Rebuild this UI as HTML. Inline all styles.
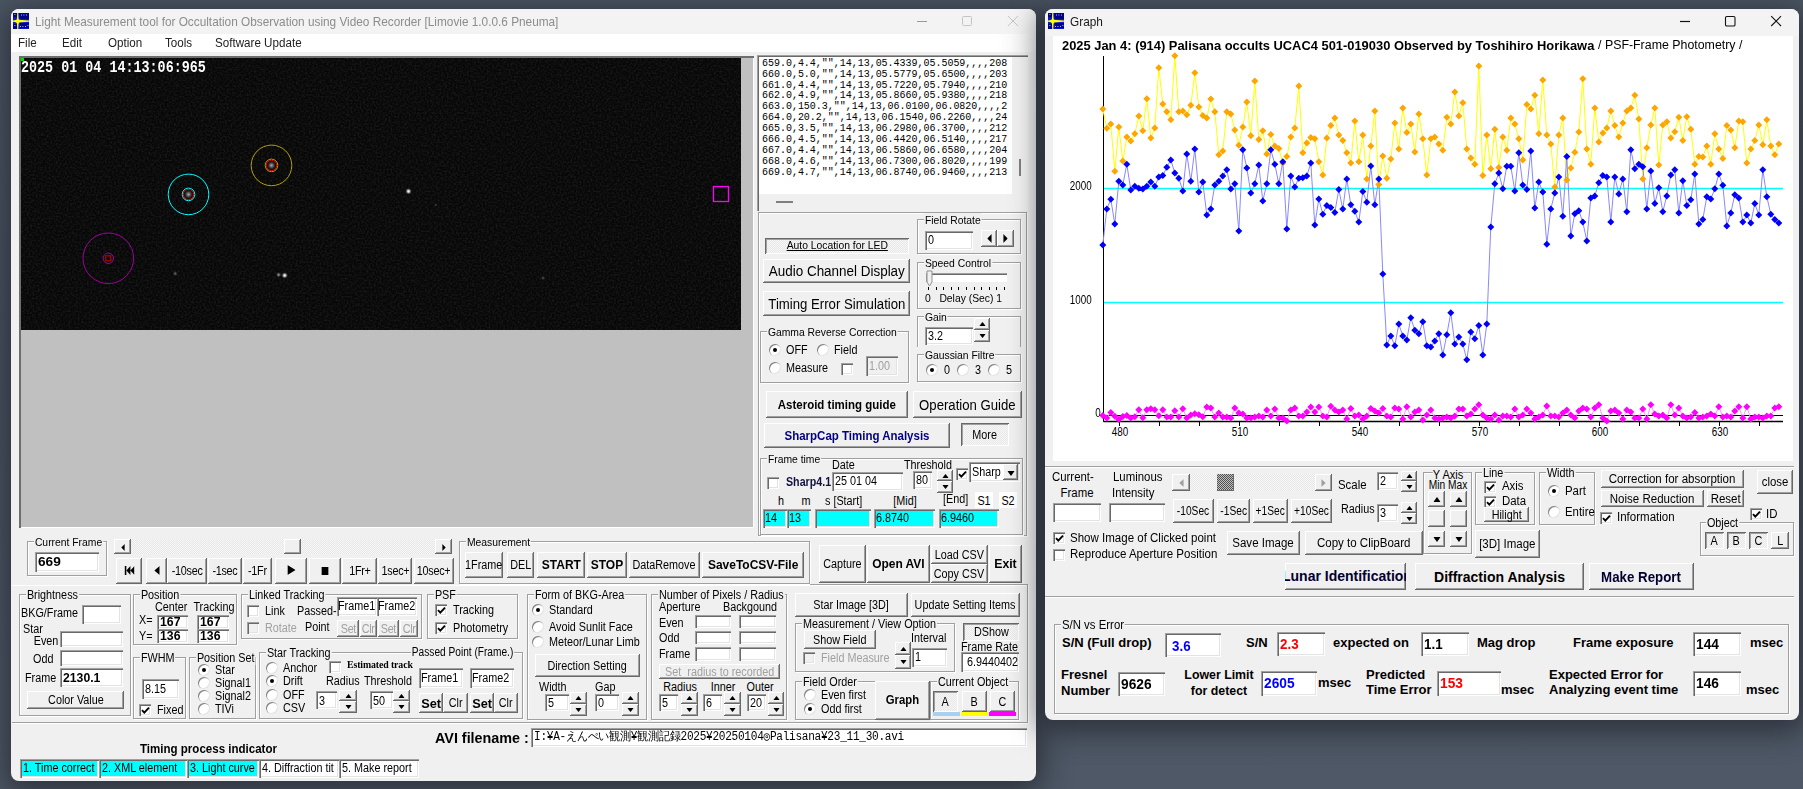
<!DOCTYPE html><html><head><meta charset="utf-8"><style>
*{box-sizing:border-box}
body{margin:0;width:1803px;height:789px;overflow:hidden;position:relative;font-family:"Liberation Sans",sans-serif;font-size:12px;color:#000;
background:linear-gradient(180deg,#4c5664 0%,#485260 40%,#4e5866 100%)}
.a{position:absolute}
.t{white-space:nowrap}
.win{background:#f0f0f0;border-radius:8px;box-shadow:0 6px 28px 6px rgba(25,28,35,.6);overflow:hidden}
.b{background:#f0f0f0;box-shadow:inset -1px -1px #696969,inset 1px 1px #fff,inset -2px -2px #a0a0a0;display:flex;align-items:center;justify-content:center;white-space:nowrap;overflow:hidden;line-height:1}
.bp{background:#f0f0f0;background-image:repeating-conic-gradient(#f6f6f6 0 25%,#e8e8e8 0 50%);background-size:2px 2px;box-shadow:inset 1px 1px #696969,inset -1px -1px #fff,inset 2px 2px #a0a0a0;display:flex;align-items:center;justify-content:center;white-space:nowrap;overflow:hidden;line-height:1}
.i{background:#fff;box-shadow:inset 1px 1px #a0a0a0,inset 2px 2px #696969,inset -1px -1px #fff,inset -2px -2px #e3e3e3;padding-left:3px;white-space:nowrap;overflow:hidden}
.g{border:1px solid #a0a0a0;box-shadow:inset 1px 1px #fff,1px 1px #fff}
.gl{background:#f0f0f0;padding:0 1px}
.ck{background:#fff;box-shadow:inset 1px 1px #a0a0a0,inset 2px 2px #696969,inset -1px -1px #fff,inset -2px -2px #e3e3e3}
.ck.dis{background:#f0f0f0}
.rd{width:12px;height:12px;border-radius:50%;background:#fff;box-shadow:inset 1px 1px #808080,inset -1px -1px #e3e3e3}
.dis{color:#a0a0a0}
.cy{background:#00ffff}
</style></head><body><div class="a win" style="left:11px;top:9px;width:1025px;height:772px"></div>
<div class="a" style="left:11px;top:9px;width:1025px;height:25px;background:#f3f3f3;border-radius:8px 8px 0 0"></div>
<svg class="a" style="left:13px;top:13px" width="16" height="16" viewBox="0 0 16 16">
<rect x="0" y="0" width="16" height="16" fill="#0a14d8"/>
<path d="M6 0H16V6H7Z M0 0H4V4H0Z M7 10H16V15H7Z M0 11H4V16H0Z" fill="#00007a" opacity=".85"/>
<path d="M1.5 1.5h.8M8 2h.8M10.5 2h.8M13 2h.8M1.5 12.5h.8M7 13.5h.8M9.5 13.5h.8M12 13.5h.8M14.5 12.5h.8" stroke="#e8e8ff" stroke-width="1"/>
<path d="M4.2 0 L5.3 0 L5.6 6.8 L16 7.6 L16 8.8 L5.6 9.6 L5.3 16 L4.2 16 L3.9 9.6 L0 8.8 L0 7.6 L3.9 6.8Z" fill="#ffff00"/>
<path d="M4.75 5 L7 8.2 L4.75 11.4 L2.5 8.2Z" fill="#ffff00"/></svg>
<div class="a t" style="left:35px;top:14.0px;font-size:13px;line-height:15px;color:#8c8c8c;transform:scaleX(0.908);transform-origin:0 50%;">Light Measurement tool for Occultation Observation using Video Recorder [Limovie 1.0.0.6 Pneuma]</div>
<svg class="a" style="left:915px;top:14px" width="110" height="16" viewBox="0 0 110 16"><path d="M2 7.5 H12" stroke="#9a9a9a" stroke-width="1"/><rect x="47.5" y="2.5" width="9" height="9" rx="1" fill="none" stroke="#c4c4c4"/><path d="M93 2 L103 12 M103 2 L93 12" stroke="#c4c4c4" stroke-width="1"/></svg>
<div class="a" style="left:11px;top:34px;width:1025px;height:18px;background:linear-gradient(90deg,#fff 0,#fff 96%,#f3f3f3 100%)"></div>
<div class="a t" style="left:18px;top:36.2px;font-size:12.5px;line-height:14.5px;color:#222;transform:scaleX(0.93);transform-origin:0 50%;">File</div>
<div class="a t" style="left:62px;top:36.2px;font-size:12.5px;line-height:14.5px;color:#222;transform:scaleX(0.93);transform-origin:0 50%;">Edit</div>
<div class="a t" style="left:108px;top:36.2px;font-size:12.5px;line-height:14.5px;color:#222;transform:scaleX(0.93);transform-origin:0 50%;">Option</div>
<div class="a t" style="left:165px;top:36.2px;font-size:12.5px;line-height:14.5px;color:#222;transform:scaleX(0.93);transform-origin:0 50%;">Tools</div>
<div class="a t" style="left:215px;top:36.2px;font-size:12.5px;line-height:14.5px;color:#222;transform:scaleX(0.93);transform-origin:0 50%;">Software Update</div>
<div class="a" style="left:19px;top:56px;width:735px;height:472px;background:#c0c0c0;box-shadow:inset 2px 2px #6e6e6e,inset -1px -1px #fff"></div>
<div class="a" style="left:21px;top:58px;width:720px;height:272px;background:#070707"></div>
<svg class="a" style="left:21px;top:58px" width="720" height="272" viewBox="21 58 720 272">
<defs><radialGradient id="st"><stop offset="0" stop-color="#fff"/><stop offset=".35" stop-color="#bbb"/><stop offset="1" stop-color="#222" stop-opacity="0"/></radialGradient>
<radialGradient id="st2"><stop offset="0" stop-color="#aaa"/><stop offset=".4" stop-color="#555"/><stop offset="1" stop-color="#111" stop-opacity="0"/></radialGradient>
<filter id="nz" x="0" y="0" width="100%" height="100%"><feTurbulence type="fractalNoise" baseFrequency="0.55" numOctaves="1" seed="3"/><feColorMatrix values="0 0 0 0 0.1  0 0 0 0 0.1  0 0 0 0 0.1  0 0 0 1.2 -0.45"/></filter></defs>
<rect x="21" y="58" width="720" height="272" filter="url(#nz)" opacity=".45"/>
<circle cx="188.5" cy="194.4" r="5" fill="url(#st2)"/>
<circle cx="188.5" cy="194.4" r="20.3" fill="none" stroke="#00ffff" stroke-width="1"/>
<circle cx="188.5" cy="194.4" r="6.3" fill="none" stroke="#00ffff" stroke-width="1"/>
<circle cx="188.5" cy="194.4" r="5.2" fill="none" stroke="#ff0000" stroke-width="1"/>
<circle cx="271.5" cy="165.4" r="5" fill="url(#st2)"/>
<circle cx="271.5" cy="165.4" r="20.3" fill="none" stroke="#b4a000" stroke-width="1"/>
<circle cx="271.5" cy="165.4" r="6.3" fill="none" stroke="#b4a000" stroke-width="1"/>
<circle cx="271.5" cy="165.4" r="5.2" fill="none" stroke="#e00000" stroke-width="1"/>
<circle cx="108.3" cy="258.3" r="25.3" fill="none" stroke="#a000a0" stroke-width="1"/>
<circle cx="108.3" cy="258.3" r="5.2" fill="none" stroke="#a000a0" stroke-width="1"/>
<rect x="105.8" y="255.8" width="5" height="5" fill="none" stroke="#d00000" stroke-width="1"/>
<circle cx="408.5" cy="191.3" r="3.5" fill="url(#st)"/>
<circle cx="278.6" cy="274.8" r="3" fill="url(#st2)"/>
<circle cx="284.7" cy="275.4" r="3.5" fill="url(#st)"/>
<circle cx="175.2" cy="273.6" r="3" fill="url(#st2)" opacity=".6"/>
<circle cx="543" cy="278" r="2.5" fill="url(#st2)" opacity=".5"/>
<circle cx="436" cy="205" r="2" fill="url(#st2)" opacity=".4"/>
<rect x="713.5" y="186.5" width="15" height="15" fill="none" stroke="#ff00ff" stroke-width="1.3"/>
</svg>
<div class="a t" style="left:21px;top:58px;font-family:'Liberation Mono',monospace;font-weight:bold;font-size:13.4px;line-height:17px;color:#fff;transform:scaleY(1.18);transform-origin:0 0;letter-spacing:0px">2025 01 04 14:13:06:965</div>
<div class="a" style="left:757px;top:55px;width:271px;height:156px;background:linear-gradient(90deg,#f0f0f0 0,#f0f0f0 94%,#f6f6f6 100%);box-shadow:inset 1px 1px #a0a0a0,inset 2px 2px #696969"></div>
<div class="a" style="left:759px;top:57px;width:253px;height:137px;background:#fff"></div>
<div class="a t" style="left:762px;top:58.6px;font-family:'Liberation Mono',monospace;font-size:10px;line-height:10.95px;letter-spacing:-0.02px;color:#000">659.0,4.4,&quot;&quot;,14,13,05.4339,05.5059,,,,208<br>660.0,5.0,&quot;&quot;,14,13,05.5779,05.6500,,,,203<br>661.0,4.4,&quot;&quot;,14,13,05.7220,05.7940,,,,210<br>662.0,4.9,&quot;&quot;,14,13,05.8660,05.9380,,,,218<br>663.0,150.3,&quot;&quot;,14,13,06.0100,06.0820,,,,2<br>664.0,20.2,&quot;&quot;,14,13,06.1540,06.2260,,,,24<br>665.0,3.5,&quot;&quot;,14,13,06.2980,06.3700,,,,212<br>666.0,4.5,&quot;&quot;,14,13,06.4420,06.5140,,,,217<br>667.0,4.4,&quot;&quot;,14,13,06.5860,06.6580,,,,204<br>668.0,4.6,&quot;&quot;,14,13,06.7300,06.8020,,,,199<br>669.0,4.7,&quot;&quot;,14,13,06.8740,06.9460,,,,213</div>
<div class="a" style="left:1019px;top:159px;width:2px;height:17px;background:#808080"></div>
<div class="a" style="left:21px;top:58px;width:3px;height:3px;background:#00e000"></div>
<div class="a" style="left:776px;top:201px;width:17px;height:2px;background:#808080"></div>
<div class="a g" style="left:758px;top:212px;width:269px;height:324px;"></div>
<div class="a bp" style="left:765px;top:238px;width:144px;height:16px;font-size:11.5px;"><span style="display:inline-block;transform:scaleX(0.9);"><u>Auto Location for LED</u></span></div>
<div class="a b" style="left:763px;top:259px;width:147px;height:24px;font-size:14px;"><span style="display:inline-block;transform:scaleX(0.96);">Audio Channel Display</span></div>
<div class="a b" style="left:763px;top:291px;width:147px;height:25px;font-size:14px;"><span style="display:inline-block;transform:scaleX(0.94);">Timing Error Simulation</span></div>
<div class="a g" style="left:917px;top:219px;width:104px;height:35px;"></div>
<div class="a t gl" style="left:924px;top:213px;font-size:11.5px;line-height:14px;transform:scaleX(0.9);transform-origin:0 50%">Field Rotate</div>
<div class="a i" style="left:925px;top:231px;width:48px;height:19px;font-size:12px;line-height:19px;"><span style="display:inline-block;transform:scaleX(0.9);transform-origin:0 50%">0</span></div>
<div class="a b" style="left:981px;top:230px;width:16px;height:17px;font-size:12px;"><span style="display:inline-block;transform:scaleX(0.9);"><svg width="5" height="9" viewBox="0 0 5 9"><path d="M5 0 L0 4.5 L5 9Z"/></svg></span></div>
<div class="a b" style="left:997px;top:230px;width:17px;height:17px;font-size:12px;"><span style="display:inline-block;transform:scaleX(0.9);"><svg width="5" height="9" viewBox="0 0 5 9"><path d="M0 0 L5 4.5 L0 9Z"/></svg></span></div>
<div class="a g" style="left:917px;top:262px;width:104px;height:47px;"></div>
<div class="a t gl" style="left:924px;top:256px;font-size:11.5px;line-height:14px;transform:scaleX(0.9);transform-origin:0 50%">Speed Control</div>
<div class="a" style="left:926px;top:273px;width:81px;height:9px;background:#fff;box-shadow:inset 1px 1px #a0a0a0,inset 2px 2px #696969,inset -1px -1px #fff"></div>
<svg class="a" style="left:926px;top:270px" width="8" height="17" viewBox="0 0 8 17"><path d="M1 1 H6 V12 L3.5 16 L1 12Z" fill="#f0f0f0" stroke="#909090"/></svg>
<div class="a" style="left:928.0px;top:287px;width:1px;height:3px;background:#000"></div>
<div class="a" style="left:935.6px;top:287px;width:1px;height:3px;background:#000"></div>
<div class="a" style="left:943.2px;top:287px;width:1px;height:3px;background:#000"></div>
<div class="a" style="left:950.8px;top:287px;width:1px;height:3px;background:#000"></div>
<div class="a" style="left:958.4px;top:287px;width:1px;height:3px;background:#000"></div>
<div class="a" style="left:966.0px;top:287px;width:1px;height:3px;background:#000"></div>
<div class="a" style="left:973.6px;top:287px;width:1px;height:3px;background:#000"></div>
<div class="a" style="left:981.2px;top:287px;width:1px;height:3px;background:#000"></div>
<div class="a" style="left:988.8px;top:287px;width:1px;height:3px;background:#000"></div>
<div class="a" style="left:996.4px;top:287px;width:1px;height:3px;background:#000"></div>
<div class="a" style="left:1004.0px;top:287px;width:1px;height:3px;background:#000"></div>
<div class="a t" style="left:925px;top:291.9px;font-size:11.5px;line-height:13.5px;transform:scaleX(0.9);transform-origin:0 50%;">0&nbsp;&nbsp;&nbsp;Delay (Sec) 1</div>
<div class="a g" style="left:917px;top:316px;width:104px;height:31px;border-bottom:none;box-shadow:inset 1px 1px #fff"></div>
<div class="a t gl" style="left:924px;top:310px;font-size:11.5px;line-height:14px;transform:scaleX(0.9);transform-origin:0 50%">Gain</div>
<div class="a i" style="left:925px;top:327px;width:48px;height:18px;font-size:12px;line-height:18px;"><span style="display:inline-block;transform:scaleX(0.9);transform-origin:0 50%">3.2</span></div>
<div class="a b" style="left:974px;top:318px;width:16px;height:12px;font-size:12px;line-height:0"><span style="display:inline-block;transform:scaleX(0.9);"><svg width="7" height="4" viewBox="0 0 7 4"><path d="M0 4 L3.5 0 L7 4Z" fill="#000"/></svg></span></div>
<div class="a b" style="left:974px;top:330px;width:16px;height:12px;font-size:12px;line-height:0"><span style="display:inline-block;transform:scaleX(0.9);"><svg width="7" height="4" viewBox="0 0 7 4"><path d="M0 0 L3.5 4 L7 0Z" fill="#000"/></svg></span></div>
<div class="a g" style="left:917px;top:354px;width:104px;height:28px;"></div>
<div class="a t gl" style="left:924px;top:348px;font-size:11.5px;line-height:14px;transform:scaleX(0.9);transform-origin:0 50%">Gaussian Filtre</div>
<div class="a g" style="left:760px;top:331px;width:149px;height:52px;"></div>
<div class="a t gl" style="left:767px;top:325px;font-size:11.5px;line-height:14px;transform:scaleX(0.9);transform-origin:0 50%">Gamma Reverse Correction</div>
<div class="a rd" style="left:768.5px;top:344px"><div style="position:absolute;left:4px;top:4px;width:4px;height:4px;border-radius:50%;background:#000"></div></div>
<div class="a t" style="left:786px;top:343.0px;font-size:12px;line-height:14px;transform:scaleX(0.9);transform-origin:0 50%;">OFF</div>
<div class="a rd" style="left:816.5px;top:344px"></div>
<div class="a t" style="left:834px;top:343.0px;font-size:12px;line-height:14px;transform:scaleX(0.9);transform-origin:0 50%;">Field</div>
<div class="a rd" style="left:768.5px;top:362px"></div>
<div class="a t" style="left:786px;top:361.0px;font-size:12px;line-height:14px;transform:scaleX(0.9);transform-origin:0 50%;">Measure</div>
<div class="a ck" style="left:841px;top:363px;width:12px;height:12px"></div>
<div class="a i" style="left:866px;top:356px;width:32px;height:20px;font-size:12px;line-height:20px;color:#a0a0a0;background:#f0f0f0"><span style="display:inline-block;transform:scaleX(0.9);transform-origin:0 50%">1.00</span></div>
<div class="a rd" style="left:925.5px;top:363.7px"><div style="position:absolute;left:4px;top:4px;width:4px;height:4px;border-radius:50%;background:#000"></div></div>
<div class="a t" style="left:944px;top:363.0px;font-size:12px;line-height:14px;transform:scaleX(0.9);transform-origin:0 50%;">0</div>
<div class="a rd" style="left:956.5px;top:363.7px"></div>
<div class="a t" style="left:975px;top:363.0px;font-size:12px;line-height:14px;transform:scaleX(0.9);transform-origin:0 50%;">3</div>
<div class="a rd" style="left:987.5px;top:363.7px"></div>
<div class="a t" style="left:1006px;top:363.0px;font-size:12px;line-height:14px;transform:scaleX(0.9);transform-origin:0 50%;">5</div>
<div class="a b" style="left:766px;top:391px;width:142px;height:27px;font-size:13px;font-weight:bold;"><span style="display:inline-block;transform:scaleX(0.883);">Asteroid timing guide</span></div>
<div class="a b" style="left:913px;top:391px;width:109px;height:27px;font-size:14px;"><span style="display:inline-block;transform:scaleX(0.94);">Operation Guide</span></div>
<div class="a b" style="left:764px;top:423px;width:186px;height:25px;font-size:13px;font-weight:bold;color:#000080;"><span style="display:inline-block;transform:scaleX(0.884);">SharpCap Timing Analysis</span></div>
<div class="a bp" style="left:961px;top:423px;width:48px;height:23px;font-size:12px;"><span style="display:inline-block;transform:scaleX(0.9);">More</span></div>
<div class="a g" style="left:760px;top:458px;width:263px;height:77px;"></div>
<div class="a t gl" style="left:767px;top:452px;font-size:11.5px;line-height:14px;transform:scaleX(0.9);transform-origin:0 50%">Frame time</div>
<div class="a t" style="left:832px;top:458.0px;font-size:12px;line-height:14px;transform:scaleX(0.9);transform-origin:0 50%;">Date</div>
<div class="a t" style="left:904px;top:458.0px;font-size:12px;line-height:14px;transform:scaleX(0.9);transform-origin:0 50%;">Threshold</div>
<div class="a ck" style="left:767px;top:477px;width:12px;height:12px"></div>
<div class="a t" style="left:786px;top:475.0px;font-size:12px;line-height:14px;font-weight:bold;color:#101040;transform:scaleX(0.89);transform-origin:0 50%;">Sharp4.1</div>
<div class="a i" style="left:832px;top:472px;width:71px;height:19px;font-size:12px;line-height:19px;"><span style="display:inline-block;transform:scaleX(0.9);transform-origin:0 50%">25 01 04</span></div>
<div class="a i" style="left:913px;top:471px;width:19px;height:18px;font-size:12px;line-height:18px;"><span style="display:inline-block;transform:scaleX(0.9);transform-origin:0 50%">80</span></div>
<div class="a b" style="left:937px;top:470px;width:16px;height:11px;font-size:12px;line-height:0"><span style="display:inline-block;transform:scaleX(0.9);"><svg width="7" height="4" viewBox="0 0 7 4"><path d="M0 4 L3.5 0 L7 4Z" fill="#000"/></svg></span></div>
<div class="a b" style="left:937px;top:481px;width:16px;height:12px;font-size:12px;line-height:0"><span style="display:inline-block;transform:scaleX(0.9);"><svg width="7" height="4" viewBox="0 0 7 4"><path d="M0 0 L3.5 4 L7 0Z" fill="#000"/></svg></span></div>
<div class="a ck" style="left:956px;top:468px;width:12px;height:12px"><svg width="9" height="9" viewBox="0 0 9 9" style="position:absolute;left:1.5px;top:1.5px"><path d="M1 4.2 L3.3 6.6 L8 1.6" stroke="#000" stroke-width="1.9" fill="none"/></svg></div>
<div class="a i" style="left:969px;top:462px;width:51px;height:20px;font-size:12px;line-height:20px;"><span style="display:inline-block;transform:scaleX(0.9);transform-origin:0 50%">Sharp</span></div>
<div class="a b" style="left:1003px;top:464px;width:15px;height:16px;font-size:12px;"><span style="display:inline-block;transform:scaleX(0.9);"><svg width="8" height="5" viewBox="0 0 8 5"><path d="M0 0 L4 5 L8 0Z"/></svg></span></div>
<div class="a t" style="left:781px;top:494.0px;font-size:12px;line-height:14px;transform:translateX(-50%) scaleX(0.9);transform-origin:50% 50%;">h</div>
<div class="a t" style="left:805.5px;top:494.0px;font-size:12px;line-height:14px;transform:translateX(-50%) scaleX(0.9);transform-origin:50% 50%;">m</div>
<div class="a t" style="left:825px;top:494.0px;font-size:12px;line-height:14px;transform:scaleX(0.9);transform-origin:0 50%;">s [Start]</div>
<div class="a t" style="left:905px;top:494.0px;font-size:12px;line-height:14px;transform:translateX(-50%) scaleX(0.9);transform-origin:50% 50%;">[Mid]</div>
<div class="a t" style="left:943px;top:492.0px;font-size:12px;line-height:14px;transform:scaleX(0.9);transform-origin:0 50%;">[End]</div>
<div class="a" style="left:975px;top:492px;width:18px;height:16px;background:#fff"></div>
<div class="a t" style="left:984px;top:494.0px;font-size:12px;line-height:14px;transform:translateX(-50%) scaleX(0.9);transform-origin:50% 50%;">S1</div>
<div class="a" style="left:999px;top:492px;width:18px;height:16px;background:#fff"></div>
<div class="a t" style="left:1008px;top:494.0px;font-size:12px;line-height:14px;transform:translateX(-50%) scaleX(0.9);transform-origin:50% 50%;">S2</div>
<div class="a i" style="left:763px;top:509px;width:24px;height:19px;font-size:12px;line-height:19px;background:#00ffff;padding-left:2px"><span style="display:inline-block;transform:scaleX(0.9);transform-origin:0 50%">14</span></div>
<div class="a i" style="left:787px;top:509px;width:24px;height:19px;font-size:12px;line-height:19px;background:#00ffff;padding-left:2px"><span style="display:inline-block;transform:scaleX(0.9);transform-origin:0 50%">13</span></div>
<div class="a i" style="left:815px;top:509px;width:56px;height:19px;font-size:12px;line-height:19px;background:#00ffff;padding-left:2px"><span style="display:inline-block;transform:scaleX(0.9);transform-origin:0 50%"></span></div>
<div class="a i" style="left:874px;top:509px;width:61px;height:19px;font-size:12px;line-height:19px;background:#00ffff;padding-left:2px"><span style="display:inline-block;transform:scaleX(0.9);transform-origin:0 50%">6.8740</span></div>
<div class="a i" style="left:939px;top:509px;width:60px;height:19px;font-size:12px;line-height:19px;background:#00ffff;padding-left:2px"><span style="display:inline-block;transform:scaleX(0.9);transform-origin:0 50%">6.9460</span></div>
<div class="a g" style="left:27px;top:541px;width:80px;height:35px;"></div>
<div class="a t gl" style="left:34px;top:535px;font-size:11.5px;line-height:14px;transform:scaleX(0.9);transform-origin:0 50%">Current Frame</div>
<div class="a i" style="left:35px;top:552px;width:64px;height:20px;font-size:13px;line-height:20px;font-weight:bold;"><span style="display:inline-block;transform:scaleX(1.05);transform-origin:0 50%">669</span></div>
<div class="a" style="left:114px;top:539px;width:338px;height:15px;background-image:repeating-conic-gradient(#f8f8f8 0 25%,#e6e6e6 0 50%);background-size:2px 2px"></div>
<div class="a b" style="left:114px;top:539px;width:17px;height:15px;font-size:12px;"><span style="display:inline-block;transform:scaleX(0.9);"><svg width="4" height="7" viewBox="0 0 4 7"><path d="M4 0 L0 3.5 L4 7Z"/></svg></span></div>
<div class="a b" style="left:284px;top:539px;width:17px;height:15px;font-size:12px;"><span style="display:inline-block;transform:scaleX(0.9);"></span></div>
<div class="a b" style="left:435px;top:539px;width:17px;height:15px;font-size:12px;"><span style="display:inline-block;transform:scaleX(0.9);"><svg width="4" height="7" viewBox="0 0 4 7"><path d="M0 0 L4 3.5 L0 7Z"/></svg></span></div>
<div class="a b" style="left:116px;top:558px;width:26px;height:26px;font-size:12px;letter-spacing:-0.3px"><span style="display:inline-block;transform:scaleX(0.9);"><svg width="11" height="9" viewBox="0 0 11 9"><rect x="0" y="0" width="2" height="9"/><path d="M6.5 0 L2 4.5 L6.5 9Z M11 0 L6.5 4.5 L11 9Z"/></svg></span></div>
<div class="a b" style="left:146px;top:558px;width:21px;height:26px;font-size:12px;letter-spacing:-0.3px"><span style="display:inline-block;transform:scaleX(0.9);"><svg width="6" height="9" viewBox="0 0 6 9"><path d="M6 0 L0 4.5 L6 9Z"/></svg></span></div>
<div class="a b" style="left:167px;top:558px;width:40px;height:26px;font-size:12px;letter-spacing:-0.3px"><span style="display:inline-block;transform:scaleX(0.9);">-10sec</span></div>
<div class="a b" style="left:208px;top:558px;width:34px;height:26px;font-size:12px;letter-spacing:-0.3px"><span style="display:inline-block;transform:scaleX(0.9);">-1sec</span></div>
<div class="a b" style="left:243px;top:558px;width:29px;height:26px;font-size:12px;letter-spacing:-0.3px"><span style="display:inline-block;transform:scaleX(0.9);">-1Fr</span></div>
<div class="a b" style="left:275px;top:558px;width:32px;height:26px;font-size:12px;letter-spacing:-0.3px"><span style="display:inline-block;transform:scaleX(0.9);"><svg width="9" height="10" viewBox="0 0 9 10"><path d="M0 0 L9 5 L0 10Z"/></svg></span></div>
<div class="a b" style="left:309px;top:558px;width:32px;height:26px;font-size:12px;letter-spacing:-0.3px"><span style="display:inline-block;transform:scaleX(0.9);"><svg width="8" height="8" viewBox="0 0 8 8"><rect width="8" height="8"/></svg></span></div>
<div class="a b" style="left:342px;top:558px;width:35px;height:26px;font-size:12px;letter-spacing:-0.3px"><span style="display:inline-block;transform:scaleX(0.9);">1Fr+</span></div>
<div class="a b" style="left:378px;top:558px;width:34px;height:26px;font-size:12px;letter-spacing:-0.3px"><span style="display:inline-block;transform:scaleX(0.9);">1sec+</span></div>
<div class="a b" style="left:414px;top:558px;width:40px;height:26px;font-size:12px;letter-spacing:-0.3px"><span style="display:inline-block;transform:scaleX(0.9);">10sec+</span></div>
<div class="a g" style="left:459px;top:541px;width:351px;height:43px;"></div>
<div class="a t gl" style="left:466px;top:535px;font-size:11.5px;line-height:14px;transform:scaleX(0.9);transform-origin:0 50%">Measurement</div>
<div class="a b" style="left:465px;top:552px;width:38px;height:26px;font-size:12px;"><span style="display:inline-block;transform:scaleX(0.9);">1Frame</span></div>
<div class="a b" style="left:507px;top:552px;width:27px;height:26px;font-size:12px;"><span style="display:inline-block;transform:scaleX(0.9);">DEL</span></div>
<div class="a b" style="left:537px;top:552px;width:48px;height:26px;font-size:12.5px;font-weight:bold;"><span style="display:inline-block;transform:scaleX(0.96);">START</span></div>
<div class="a b" style="left:587px;top:552px;width:40px;height:26px;font-size:12.5px;font-weight:bold;"><span style="display:inline-block;transform:scaleX(0.96);">STOP</span></div>
<div class="a b" style="left:629px;top:552px;width:71px;height:26px;font-size:12px;"><span style="display:inline-block;transform:scaleX(0.9);">DataRemove</span></div>
<div class="a b" style="left:702px;top:552px;width:102px;height:26px;font-size:12.5px;font-weight:bold;"><span style="display:inline-block;transform:scaleX(0.96);">SaveToCSV-File</span></div>
<div class="a b" style="left:819px;top:545px;width:47px;height:38px;font-size:12px;"><span style="display:inline-block;transform:scaleX(0.9);">Capture</span></div>
<div class="a b" style="left:867px;top:545px;width:63px;height:38px;font-size:12.5px;font-weight:bold;"><span style="display:inline-block;transform:scaleX(0.956);">Open AVI</span></div>
<div class="a b" style="left:931px;top:545px;width:57px;height:19px;font-size:12px;"><span style="display:inline-block;transform:scaleX(0.9);">Load CSV</span></div>
<div class="a b" style="left:931px;top:564px;width:57px;height:19px;font-size:12px;"><span style="display:inline-block;transform:scaleX(0.9);">Copy CSV</span></div>
<div class="a b" style="left:989px;top:545px;width:33px;height:38px;font-size:12.5px;font-weight:bold;"><span style="display:inline-block;transform:scaleX(0.98);">Exit</span></div>
<div class="a" style="left:12px;top:585px;width:1016px;height:1px;background:#fff"></div>
<div class="a" style="left:12px;top:722px;width:1016px;height:1px;background:#a0a0a0"></div>
<div class="a" style="left:12px;top:723px;width:1016px;height:1px;background:#fff"></div>
<div class="a g" style="left:19px;top:594px;width:112px;height:122px;"></div>
<div class="a t gl" style="left:26px;top:588px;font-size:12px;line-height:14px;transform:scaleX(0.9);transform-origin:0 50%">Brightness</div>
<div class="a t" style="left:21px;top:606.0px;font-size:12px;line-height:14px;transform:scaleX(0.9);transform-origin:0 50%;">BKG/Frame</div>
<div class="a i" style="left:82px;top:605px;width:39px;height:19px;font-size:12px;line-height:19px;"><span style="display:inline-block;transform:scaleX(0.9);transform-origin:0 50%"></span></div>
<div class="a t" style="left:23px;top:622.0px;font-size:12px;line-height:14px;transform:scaleX(0.9);transform-origin:0 50%;">Star</div>
<div class="a t" style="right:1745px;top:633.5px;font-size:12px;line-height:14px;transform:scaleX(0.9);transform-origin:100% 50%;">Even</div>
<div class="a i" style="left:60px;top:631px;width:63px;height:16px;font-size:12px;line-height:16px;"><span style="display:inline-block;transform:scaleX(0.9);transform-origin:0 50%"></span></div>
<div class="a t" style="left:33px;top:652.0px;font-size:12px;line-height:14px;transform:scaleX(0.9);transform-origin:0 50%;">Odd</div>
<div class="a i" style="left:60px;top:650px;width:63px;height:16px;font-size:12px;line-height:16px;"><span style="display:inline-block;transform:scaleX(0.9);transform-origin:0 50%"></span></div>
<div class="a t" style="left:25px;top:671.0px;font-size:12px;line-height:14px;transform:scaleX(0.9);transform-origin:0 50%;">Frame</div>
<div class="a i" style="left:60px;top:668px;width:63px;height:19px;font-size:13px;line-height:19px;font-weight:bold;"><span style="display:inline-block;transform:scaleX(0.94);transform-origin:0 50%">2130.1</span></div>
<div class="a b" style="left:27px;top:691px;width:97px;height:18px;font-size:12px;"><span style="display:inline-block;transform:scaleX(0.9);">Color Value</span></div>
<div class="a g" style="left:133px;top:594px;width:104px;height:51px;"></div>
<div class="a t gl" style="left:140px;top:588px;font-size:12px;line-height:14px;transform:scaleX(0.9);transform-origin:0 50%">Position</div>
<div class="a t" style="left:155px;top:600.0px;font-size:12px;line-height:14px;transform:scaleX(0.9);transform-origin:0 50%;">Center&nbsp;&nbsp;Tracking</div>
<div class="a t" style="left:139px;top:613.0px;font-size:12px;line-height:14px;transform:scaleX(0.9);transform-origin:0 50%;">X=</div>
<div class="a t" style="left:139px;top:629.0px;font-size:12px;line-height:14px;transform:scaleX(0.9);transform-origin:0 50%;">Y=</div>
<div class="a i" style="left:157px;top:615px;width:31px;height:14px;font-size:12.5px;line-height:14px;font-weight:bold;line-height:15px"><span style="display:inline-block;transform:scaleX(0.98);transform-origin:0 50%">167</span></div>
<div class="a i" style="left:197px;top:615px;width:32px;height:14px;font-size:12.5px;line-height:14px;font-weight:bold;line-height:15px"><span style="display:inline-block;transform:scaleX(0.98);transform-origin:0 50%">167</span></div>
<div class="a i" style="left:157px;top:629px;width:31px;height:14px;font-size:12.5px;line-height:14px;font-weight:bold;line-height:15px"><span style="display:inline-block;transform:scaleX(0.98);transform-origin:0 50%">136</span></div>
<div class="a i" style="left:197px;top:629px;width:32px;height:14px;font-size:12.5px;line-height:14px;font-weight:bold;line-height:15px"><span style="display:inline-block;transform:scaleX(0.98);transform-origin:0 50%">136</span></div>
<div class="a g" style="left:241px;top:594px;width:181px;height:45px;"></div>
<div class="a t gl" style="left:248px;top:588px;font-size:12px;line-height:14px;transform:scaleX(0.9);transform-origin:0 50%">Linked Tracking</div>
<div class="a ck" style="left:247px;top:605px;width:12px;height:12px"></div>
<div class="a t" style="left:265px;top:603.5px;font-size:12px;line-height:14px;transform:scaleX(0.9);transform-origin:0 50%;">Link</div>
<div class="a t" style="left:297px;top:604.0px;font-size:12px;line-height:14px;transform:scaleX(0.9);transform-origin:0 50%;">Passed-</div>
<div class="a t" style="left:305px;top:620.0px;font-size:12px;line-height:14px;transform:scaleX(0.9);transform-origin:0 50%;">Point</div>
<div class="a ck dis" style="left:247px;top:622px;width:12px;height:12px"></div>
<div class="a t" style="left:265px;top:621.0px;font-size:12px;line-height:14px;color:#a0a0a0;transform:scaleX(0.9);transform-origin:0 50%;">Rotate</div>
<div class="a i" style="left:337px;top:597px;width:40px;height:19px;font-size:12px;line-height:19px;padding-left:1px"><span style="display:inline-block;transform:scaleX(0.9);transform-origin:0 50%">Frame1</span></div>
<div class="a i" style="left:377px;top:597px;width:40px;height:19px;font-size:12px;line-height:19px;padding-left:1px"><span style="display:inline-block;transform:scaleX(0.9);transform-origin:0 50%">Frame2</span></div>
<div class="a b" style="left:337px;top:620px;width:22px;height:17px;font-size:12px;color:#a0a0a0;letter-spacing:-0.4px"><span style="display:inline-block;transform:scaleX(0.9);">Set</span></div>
<div class="a b" style="left:360px;top:620px;width:17px;height:17px;font-size:12px;color:#a0a0a0;letter-spacing:-0.4px"><span style="display:inline-block;transform:scaleX(0.9);">Clr</span></div>
<div class="a b" style="left:378px;top:620px;width:21px;height:17px;font-size:12px;color:#a0a0a0;letter-spacing:-0.4px"><span style="display:inline-block;transform:scaleX(0.9);">Set</span></div>
<div class="a b" style="left:400px;top:620px;width:18px;height:17px;font-size:12px;color:#a0a0a0;letter-spacing:-0.4px"><span style="display:inline-block;transform:scaleX(0.9);">Clr</span></div>
<div class="a g" style="left:427px;top:594px;width:91px;height:45px;"></div>
<div class="a t gl" style="left:434px;top:588px;font-size:12px;line-height:14px;transform:scaleX(0.9);transform-origin:0 50%">PSF</div>
<div class="a ck" style="left:435px;top:604px;width:12px;height:12px"><svg width="9" height="9" viewBox="0 0 9 9" style="position:absolute;left:1.5px;top:1.5px"><path d="M1 4.2 L3.3 6.6 L8 1.6" stroke="#000" stroke-width="1.9" fill="none"/></svg></div>
<div class="a t" style="left:453px;top:603.0px;font-size:12px;line-height:14px;transform:scaleX(0.9);transform-origin:0 50%;">Tracking</div>
<div class="a ck" style="left:435px;top:622px;width:12px;height:12px"><svg width="9" height="9" viewBox="0 0 9 9" style="position:absolute;left:1.5px;top:1.5px"><path d="M1 4.2 L3.3 6.6 L8 1.6" stroke="#000" stroke-width="1.9" fill="none"/></svg></div>
<div class="a t" style="left:453px;top:621.0px;font-size:12px;line-height:14px;transform:scaleX(0.9);transform-origin:0 50%;">Photometry</div>
<div class="a g" style="left:133px;top:657px;width:53px;height:62px;"></div>
<div class="a t gl" style="left:140px;top:651px;font-size:12px;line-height:14px;transform:scaleX(0.9);transform-origin:0 50%">FWHM</div>
<div class="a i" style="left:142px;top:679px;width:37px;height:20px;font-size:12px;line-height:20px;"><span style="display:inline-block;transform:scaleX(0.9);transform-origin:0 50%">8.15</span></div>
<div class="a ck" style="left:139px;top:704px;width:12px;height:12px"><svg width="9" height="9" viewBox="0 0 9 9" style="position:absolute;left:1.5px;top:1.5px"><path d="M1 4.2 L3.3 6.6 L8 1.6" stroke="#000" stroke-width="1.9" fill="none"/></svg></div>
<div class="a t" style="left:157px;top:703.0px;font-size:12px;line-height:14px;transform:scaleX(0.9);transform-origin:0 50%;">Fixed</div>
<div class="a g" style="left:189px;top:657px;width:67px;height:62px;"></div>
<div class="a t gl" style="left:196px;top:651px;font-size:12px;line-height:14px;transform:scaleX(0.9);transform-origin:0 50%">Position Set</div>
<div class="a rd" style="left:197.5px;top:664px"><div style="position:absolute;left:4px;top:4px;width:4px;height:4px;border-radius:50%;background:#000"></div></div>
<div class="a t" style="left:215px;top:663.0px;font-size:12px;line-height:14px;transform:scaleX(0.9);transform-origin:0 50%;">Star</div>
<div class="a rd" style="left:197.5px;top:677px"></div>
<div class="a t" style="left:215px;top:676.0px;font-size:12px;line-height:14px;transform:scaleX(0.9);transform-origin:0 50%;">Signal1</div>
<div class="a rd" style="left:197.5px;top:690px"></div>
<div class="a t" style="left:215px;top:689.0px;font-size:12px;line-height:14px;transform:scaleX(0.9);transform-origin:0 50%;">Signal2</div>
<div class="a rd" style="left:197.5px;top:703px"></div>
<div class="a t" style="left:215px;top:702.0px;font-size:12px;line-height:14px;transform:scaleX(0.9);transform-origin:0 50%;">TIVi</div>
<div class="a g" style="left:259px;top:652px;width:264px;height:67px;"></div>
<div class="a t gl" style="left:266px;top:646px;font-size:12px;line-height:14px;transform:scaleX(0.9);transform-origin:0 50%">Star Tracking</div>
<div class="a g" style="left:410px;top:652px;width:113px;height:67px;border-left:none;box-shadow:none"></div>
<div class="a t gl" style="left:411px;top:645px;font-size:12px;line-height:14px;transform:scaleX(0.845);transform-origin:0 50%">Passed Point (Frame.)</div>
<div class="a rd" style="left:265.5px;top:662px"></div>
<div class="a t" style="left:283px;top:661.0px;font-size:12px;line-height:14px;transform:scaleX(0.9);transform-origin:0 50%;">Anchor</div>
<div class="a rd" style="left:265.5px;top:675px"><div style="position:absolute;left:4px;top:4px;width:4px;height:4px;border-radius:50%;background:#000"></div></div>
<div class="a t" style="left:283px;top:674.0px;font-size:12px;line-height:14px;transform:scaleX(0.9);transform-origin:0 50%;">Drift</div>
<div class="a rd" style="left:265.5px;top:688.5px"></div>
<div class="a t" style="left:283px;top:687.5px;font-size:12px;line-height:14px;transform:scaleX(0.9);transform-origin:0 50%;">OFF</div>
<div class="a rd" style="left:265.5px;top:702px"></div>
<div class="a t" style="left:283px;top:701.0px;font-size:12px;line-height:14px;transform:scaleX(0.9);transform-origin:0 50%;">CSV</div>
<div class="a ck" style="left:329px;top:661px;width:12px;height:12px"></div>
<div class="a t" style="left:347px;top:659.0px;font-size:10px;line-height:12px;font-weight:bold;transform:scaleX(0.98);transform-origin:0 50%;font-family:'Liberation Serif',serif;letter-spacing:-0.1px">Estimated track</div>
<div class="a t" style="left:326px;top:674.0px;font-size:12px;line-height:14px;transform:scaleX(0.9);transform-origin:0 50%;">Radius</div>
<div class="a t" style="left:364px;top:674.0px;font-size:12px;line-height:14px;transform:scaleX(0.9);transform-origin:0 50%;">Threshold</div>
<div class="a i" style="left:316px;top:691px;width:21px;height:18px;font-size:12px;line-height:18px;padding-top:1px"><span style="display:inline-block;transform:scaleX(0.9);transform-origin:0 50%">3</span></div>
<div class="a b" style="left:339px;top:690px;width:18px;height:11px;font-size:12px;line-height:0"><span style="display:inline-block;transform:scaleX(0.9);"><svg width="7" height="4" viewBox="0 0 7 4"><path d="M0 4 L3.5 0 L7 4Z" fill="#000"/></svg></span></div>
<div class="a b" style="left:339px;top:701px;width:18px;height:12px;font-size:12px;line-height:0"><span style="display:inline-block;transform:scaleX(0.9);"><svg width="7" height="4" viewBox="0 0 7 4"><path d="M0 0 L3.5 4 L7 0Z" fill="#000"/></svg></span></div>
<div class="a i" style="left:370px;top:691px;width:23px;height:18px;font-size:12px;line-height:18px;padding-top:1px"><span style="display:inline-block;transform:scaleX(0.9);transform-origin:0 50%">50</span></div>
<div class="a b" style="left:393px;top:690px;width:17px;height:11px;font-size:12px;line-height:0"><span style="display:inline-block;transform:scaleX(0.9);"><svg width="7" height="4" viewBox="0 0 7 4"><path d="M0 4 L3.5 0 L7 4Z" fill="#000"/></svg></span></div>
<div class="a b" style="left:393px;top:701px;width:17px;height:12px;font-size:12px;line-height:0"><span style="display:inline-block;transform:scaleX(0.9);"><svg width="7" height="4" viewBox="0 0 7 4"><path d="M0 0 L3.5 4 L7 0Z" fill="#000"/></svg></span></div>
<div class="a i" style="left:419px;top:668px;width:44px;height:20px;font-size:12px;line-height:20px;padding-left:2px"><span style="display:inline-block;transform:scaleX(0.9);transform-origin:0 50%">Frame1</span></div>
<div class="a i" style="left:470px;top:668px;width:44px;height:20px;font-size:12px;line-height:20px;padding-left:2px"><span style="display:inline-block;transform:scaleX(0.9);transform-origin:0 50%">Frame2</span></div>
<div class="a b" style="left:419px;top:693px;width:24px;height:20px;font-size:13px;font-weight:bold;"><span style="display:inline-block;transform:scaleX(0.98);">Set</span></div>
<div class="a b" style="left:443px;top:693px;width:25px;height:20px;font-size:12px;"><span style="display:inline-block;transform:scaleX(0.9);">Clr</span></div>
<div class="a b" style="left:470px;top:693px;width:24px;height:20px;font-size:13px;font-weight:bold;"><span style="display:inline-block;transform:scaleX(0.98);">Set</span></div>
<div class="a b" style="left:494px;top:693px;width:24px;height:20px;font-size:12px;"><span style="display:inline-block;transform:scaleX(0.9);">Clr</span></div>
<div class="a g" style="left:527px;top:594px;width:120px;height:126px;"></div>
<div class="a t gl" style="left:534px;top:588px;font-size:12px;line-height:14px;transform:scaleX(0.9);transform-origin:0 50%">Form of BKG-Area</div>
<div class="a rd" style="left:531.5px;top:604px"><div style="position:absolute;left:4px;top:4px;width:4px;height:4px;border-radius:50%;background:#000"></div></div>
<div class="a t" style="left:549px;top:603.0px;font-size:12px;line-height:14px;transform:scaleX(0.9);transform-origin:0 50%;">Standard</div>
<div class="a rd" style="left:531.5px;top:620.5px"></div>
<div class="a t" style="left:549px;top:619.5px;font-size:12px;line-height:14px;transform:scaleX(0.9);transform-origin:0 50%;">Avoid Sunlit Face</div>
<div class="a rd" style="left:531.5px;top:636px"></div>
<div class="a t" style="left:549px;top:635.0px;font-size:12px;line-height:14px;transform:scaleX(0.9);transform-origin:0 50%;">Meteor/Lunar Limb</div>
<div class="a b" style="left:535px;top:654px;width:105px;height:23px;font-size:12px;"><span style="display:inline-block;transform:scaleX(0.9);">Direction Setting</span></div>
<div class="a t" style="left:539px;top:680.0px;font-size:12px;line-height:14px;transform:scaleX(0.9);transform-origin:0 50%;">Width</div>
<div class="a t" style="left:595px;top:680.0px;font-size:12px;line-height:14px;transform:scaleX(0.9);transform-origin:0 50%;">Gap</div>
<div class="a i" style="left:545px;top:694px;width:24px;height:17px;font-size:12px;line-height:17px;padding-top:1px"><span style="display:inline-block;transform:scaleX(0.9);transform-origin:0 50%">5</span></div>
<div class="a b" style="left:570px;top:692px;width:17px;height:12px;font-size:12px;line-height:0"><span style="display:inline-block;transform:scaleX(0.9);"><svg width="7" height="4" viewBox="0 0 7 4"><path d="M0 4 L3.5 0 L7 4Z" fill="#000"/></svg></span></div>
<div class="a b" style="left:570px;top:704px;width:17px;height:12px;font-size:12px;line-height:0"><span style="display:inline-block;transform:scaleX(0.9);"><svg width="7" height="4" viewBox="0 0 7 4"><path d="M0 0 L3.5 4 L7 0Z" fill="#000"/></svg></span></div>
<div class="a i" style="left:595px;top:694px;width:24px;height:17px;font-size:12px;line-height:17px;padding-top:1px"><span style="display:inline-block;transform:scaleX(0.9);transform-origin:0 50%">0</span></div>
<div class="a b" style="left:622px;top:692px;width:17px;height:12px;font-size:12px;line-height:0"><span style="display:inline-block;transform:scaleX(0.9);"><svg width="7" height="4" viewBox="0 0 7 4"><path d="M0 4 L3.5 0 L7 4Z" fill="#000"/></svg></span></div>
<div class="a b" style="left:622px;top:704px;width:17px;height:12px;font-size:12px;line-height:0"><span style="display:inline-block;transform:scaleX(0.9);"><svg width="7" height="4" viewBox="0 0 7 4"><path d="M0 0 L3.5 4 L7 0Z" fill="#000"/></svg></span></div>
<div class="a g" style="left:651px;top:594px;width:136px;height:126px;"></div>
<div class="a t gl" style="left:658px;top:588px;font-size:12px;line-height:14px;transform:scaleX(0.9);transform-origin:0 50%">Number of Pixels / Radius</div>
<div class="a t" style="left:659px;top:600.0px;font-size:12px;line-height:14px;transform:scaleX(0.9);transform-origin:0 50%;">Aperture</div>
<div class="a t" style="left:723px;top:600.0px;font-size:12px;line-height:14px;transform:scaleX(0.9);transform-origin:0 50%;">Backgound</div>
<div class="a t" style="left:659px;top:616.0px;font-size:12px;line-height:14px;transform:scaleX(0.9);transform-origin:0 50%;">Even</div>
<div class="a i" style="left:695px;top:615px;width:36px;height:13px;font-size:12px;line-height:13px;"><span style="display:inline-block;transform:scaleX(0.9);transform-origin:0 50%"></span></div>
<div class="a i" style="left:739px;top:615px;width:37px;height:13px;font-size:12px;line-height:13px;"><span style="display:inline-block;transform:scaleX(0.9);transform-origin:0 50%"></span></div>
<div class="a t" style="left:659px;top:631.0px;font-size:12px;line-height:14px;transform:scaleX(0.9);transform-origin:0 50%;">Odd</div>
<div class="a i" style="left:695px;top:631px;width:36px;height:13px;font-size:12px;line-height:13px;"><span style="display:inline-block;transform:scaleX(0.9);transform-origin:0 50%"></span></div>
<div class="a i" style="left:739px;top:631px;width:37px;height:13px;font-size:12px;line-height:13px;"><span style="display:inline-block;transform:scaleX(0.9);transform-origin:0 50%"></span></div>
<div class="a t" style="left:659px;top:647.0px;font-size:12px;line-height:14px;transform:scaleX(0.9);transform-origin:0 50%;">Frame</div>
<div class="a i" style="left:695px;top:647px;width:36px;height:14px;font-size:12px;line-height:14px;"><span style="display:inline-block;transform:scaleX(0.9);transform-origin:0 50%"></span></div>
<div class="a i" style="left:739px;top:647px;width:37px;height:14px;font-size:12px;line-height:14px;"><span style="display:inline-block;transform:scaleX(0.9);transform-origin:0 50%"></span></div>
<div class="a b" style="left:659px;top:664px;width:121px;height:15px;font-size:12px;color:#a0a0a0;"><span style="display:inline-block;transform:scaleX(0.9);">Set&nbsp; radius to recorded</span></div>
<div class="a t" style="left:680px;top:680.0px;font-size:12px;line-height:14px;transform:translateX(-50%) scaleX(0.9);transform-origin:50% 50%;">Radius</div>
<div class="a t" style="left:723px;top:680.0px;font-size:12px;line-height:14px;transform:translateX(-50%) scaleX(0.9);transform-origin:50% 50%;">Inner</div>
<div class="a t" style="left:760px;top:680.0px;font-size:12px;line-height:14px;transform:translateX(-50%) scaleX(0.9);transform-origin:50% 50%;">Outer</div>
<div class="a i" style="left:659px;top:694px;width:19px;height:17px;font-size:12px;line-height:17px;padding-top:1px"><span style="display:inline-block;transform:scaleX(0.9);transform-origin:0 50%">5</span></div>
<div class="a b" style="left:681px;top:692px;width:17px;height:12px;font-size:12px;line-height:0"><span style="display:inline-block;transform:scaleX(0.9);"><svg width="7" height="4" viewBox="0 0 7 4"><path d="M0 4 L3.5 0 L7 4Z" fill="#000"/></svg></span></div>
<div class="a b" style="left:681px;top:704px;width:17px;height:12px;font-size:12px;line-height:0"><span style="display:inline-block;transform:scaleX(0.9);"><svg width="7" height="4" viewBox="0 0 7 4"><path d="M0 0 L3.5 4 L7 0Z" fill="#000"/></svg></span></div>
<div class="a i" style="left:703px;top:694px;width:19px;height:17px;font-size:12px;line-height:17px;padding-top:1px"><span style="display:inline-block;transform:scaleX(0.9);transform-origin:0 50%">6</span></div>
<div class="a b" style="left:724px;top:692px;width:17px;height:12px;font-size:12px;line-height:0"><span style="display:inline-block;transform:scaleX(0.9);"><svg width="7" height="4" viewBox="0 0 7 4"><path d="M0 4 L3.5 0 L7 4Z" fill="#000"/></svg></span></div>
<div class="a b" style="left:724px;top:704px;width:17px;height:12px;font-size:12px;line-height:0"><span style="display:inline-block;transform:scaleX(0.9);"><svg width="7" height="4" viewBox="0 0 7 4"><path d="M0 0 L3.5 4 L7 0Z" fill="#000"/></svg></span></div>
<div class="a i" style="left:747px;top:694px;width:19px;height:17px;font-size:12px;line-height:17px;padding-top:1px"><span style="display:inline-block;transform:scaleX(0.9);transform-origin:0 50%">20</span></div>
<div class="a b" style="left:768px;top:692px;width:16px;height:12px;font-size:12px;line-height:0"><span style="display:inline-block;transform:scaleX(0.9);"><svg width="7" height="4" viewBox="0 0 7 4"><path d="M0 4 L3.5 0 L7 4Z" fill="#000"/></svg></span></div>
<div class="a b" style="left:768px;top:704px;width:16px;height:12px;font-size:12px;line-height:0"><span style="display:inline-block;transform:scaleX(0.9);"><svg width="7" height="4" viewBox="0 0 7 4"><path d="M0 0 L3.5 4 L7 0Z" fill="#000"/></svg></span></div>
<div class="a b" style="left:795px;top:593px;width:113px;height:24px;font-size:12px;"><span style="display:inline-block;transform:scaleX(0.9);">Star Image [3D]</span></div>
<div class="a b" style="left:911px;top:593px;width:109px;height:24px;font-size:12px;"><span style="display:inline-block;transform:scaleX(0.9);">Update Setting Items</span></div>
<div class="a g" style="left:795px;top:623px;width:160px;height:49px;"></div>
<div class="a t gl" style="left:802px;top:617px;font-size:12px;line-height:14px;transform:scaleX(0.9);transform-origin:0 50%">Measurement / View Option</div>
<div class="a b" style="left:804px;top:630px;width:72px;height:19px;font-size:12px;"><span style="display:inline-block;transform:scaleX(0.9);">Show Field</span></div>
<div class="a ck dis" style="left:803px;top:652px;width:12px;height:12px"></div>
<div class="a t" style="left:821px;top:651.0px;font-size:12px;line-height:14px;color:#a0a0a0;transform:scaleX(0.9);transform-origin:0 50%;">Field Measure</div>
<div class="a t" style="left:911px;top:631.0px;font-size:12px;line-height:14px;transform:scaleX(0.9);transform-origin:0 50%;">Interval</div>
<div class="a b" style="left:895px;top:642px;width:16px;height:13px;font-size:12px;line-height:0"><span style="display:inline-block;transform:scaleX(0.9);"><svg width="7" height="4" viewBox="0 0 7 4"><path d="M0 4 L3.5 0 L7 4Z" fill="#000"/></svg></span></div>
<div class="a b" style="left:895px;top:655px;width:16px;height:14px;font-size:12px;line-height:0"><span style="display:inline-block;transform:scaleX(0.9);"><svg width="7" height="4" viewBox="0 0 7 4"><path d="M0 0 L3.5 4 L7 0Z" fill="#000"/></svg></span></div>
<div class="a i" style="left:912px;top:648px;width:35px;height:19px;font-size:12px;line-height:19px;"><span style="display:inline-block;transform:scaleX(0.9);transform-origin:0 50%">1</span></div>
<div class="a bp" style="left:963px;top:623px;width:56px;height:18px;font-size:12px;"><span style="display:inline-block;transform:scaleX(0.9);">DShow</span></div>
<div class="a t" style="left:961px;top:640.0px;font-size:12px;line-height:14px;transform:scaleX(0.9);transform-origin:0 50%;">Frame Rate</div>
<div class="a i" style="left:961px;top:652px;width:58px;height:20px;font-size:12px;line-height:20px;padding-left:6px"><span style="display:inline-block;transform:scaleX(0.9);transform-origin:0 50%">6.9440402</span></div>
<div class="a g" style="left:795px;top:681px;width:81px;height:39px;"></div>
<div class="a t gl" style="left:802px;top:675px;font-size:12px;line-height:14px;transform:scaleX(0.9);transform-origin:0 50%">Field Order</div>
<div class="a rd" style="left:803.5px;top:689px"></div>
<div class="a t" style="left:821px;top:688.0px;font-size:12px;line-height:14px;transform:scaleX(0.9);transform-origin:0 50%;">Even first</div>
<div class="a rd" style="left:803.5px;top:703px"><div style="position:absolute;left:4px;top:4px;width:4px;height:4px;border-radius:50%;background:#000"></div></div>
<div class="a t" style="left:821px;top:702.0px;font-size:12px;line-height:14px;transform:scaleX(0.9);transform-origin:0 50%;">Odd first</div>
<div class="a b" style="left:875px;top:681px;width:55px;height:39px;font-size:12.5px;font-weight:bold;"><span style="display:inline-block;transform:scaleX(0.905);">Graph</span></div>
<div class="a g" style="left:930px;top:681px;width:89px;height:39px;"></div>
<div class="a t gl" style="left:937px;top:675px;font-size:12px;line-height:14px;transform:scaleX(0.9);transform-origin:0 50%">Current Object</div>
<div class="a bp" style="left:933px;top:691px;width:25px;height:21px;font-size:12px;"><span style="display:inline-block;transform:scaleX(0.9);">A</span></div>
<div class="a b" style="left:962px;top:691px;width:25px;height:21px;font-size:12px;"><span style="display:inline-block;transform:scaleX(0.9);">B</span></div>
<div class="a b" style="left:990px;top:691px;width:25px;height:21px;font-size:12px;"><span style="display:inline-block;transform:scaleX(0.9);">C</span></div>
<div class="a" style="left:933px;top:712px;width:27px;height:4px;background:#a8d0f0"></div>
<div class="a" style="left:961px;top:712px;width:27px;height:4px;background:#ffff00"></div>
<div class="a" style="left:989px;top:712px;width:27px;height:4px;background:#ff00ff"></div>
<div class="a t" style="left:435px;top:730.2px;font-size:14.5px;line-height:16.5px;font-weight:bold;transform:scaleX(0.99);transform-origin:0 50%;">AVI filename :</div>
<div class="a i" style="left:531px;top:728px;width:496px;height:19px;font-size:12px;line-height:19px;font-family:'Liberation Mono',monospace;letter-spacing:-0.3px"><span style="display:inline-block;transform:scaleX(0.925);transform-origin:0 50%">I:¥A-えんぺい観測¥観測記録2025¥20250104◎Palisana¥23_11_30.avi</span></div>
<div class="a t" style="left:140px;top:741.8px;font-size:12.5px;line-height:14.5px;font-weight:bold;transform:scaleX(0.923);transform-origin:0 50%;">Timing process indicator</div>
<div class="a i" style="left:20px;top:759px;width:79px;height:19px;font-size:12px;line-height:19px;background:#00ffff;padding-left:3px"><span style="display:inline-block;transform:scaleX(0.9);transform-origin:0 50%">1. Time correct</span></div>
<div class="a i" style="left:99px;top:759px;width:88px;height:19px;font-size:12px;line-height:19px;background:#00ffff;padding-left:3px"><span style="display:inline-block;transform:scaleX(0.9);transform-origin:0 50%">2. XML element</span></div>
<div class="a i" style="left:187px;top:759px;width:72px;height:19px;font-size:12px;line-height:19px;background:#00ffff;padding-left:3px"><span style="display:inline-block;transform:scaleX(0.9);transform-origin:0 50%">3. Light curve</span></div>
<div class="a i" style="left:259px;top:759px;width:80px;height:19px;font-size:12px;line-height:19px;background:#fff;padding-left:3px"><span style="display:inline-block;transform:scaleX(0.9);transform-origin:0 50%">4. Diffraction tit</span></div>
<div class="a i" style="left:339px;top:759px;width:80px;height:19px;font-size:12px;line-height:19px;background:#fff;padding-left:3px"><span style="display:inline-block;transform:scaleX(0.9);transform-origin:0 50%">5. Make report</span></div>
<div class="a" style="left:810px;top:584px;width:218px;height:1px;background:#a0a0a0"></div>
<div class="a" style="left:810px;top:585px;width:218px;height:1px;background:#fff"></div>
<div class="a" style="left:1027px;top:584px;width:1px;height:139px;background:#a0a0a0"></div>
<div class="a" style="left:1028px;top:585px;width:1px;height:138px;background:#fff"></div>
<div class="a win" style="left:1045px;top:9px;width:754px;height:711px"></div>
<div class="a" style="left:1045px;top:9px;width:754px;height:27px;background:#f3f3f3;border-radius:8px 8px 0 0"></div>
<svg class="a" style="left:1048px;top:13px" width="16" height="16" viewBox="0 0 16 16">
<rect x="0" y="0" width="16" height="16" fill="#0a14d8"/>
<path d="M6 0H16V6H7Z M0 0H4V4H0Z M7 10H16V15H7Z M0 11H4V16H0Z" fill="#00007a" opacity=".85"/>
<path d="M1.5 1.5h.8M8 2h.8M10.5 2h.8M13 2h.8M1.5 12.5h.8M7 13.5h.8M9.5 13.5h.8M12 13.5h.8M14.5 12.5h.8" stroke="#e8e8ff" stroke-width="1"/>
<path d="M4.2 0 L5.3 0 L5.6 6.8 L16 7.6 L16 8.8 L5.6 9.6 L5.3 16 L4.2 16 L3.9 9.6 L0 8.8 L0 7.6 L3.9 6.8Z" fill="#ffff00"/>
<path d="M4.75 5 L7 8.2 L4.75 11.4 L2.5 8.2Z" fill="#ffff00"/></svg>
<div class="a t" style="left:1070px;top:14.0px;font-size:13px;line-height:15px;color:#1a1a1a;transform:scaleX(0.91);transform-origin:0 50%;">Graph</div>
<svg class="a" style="left:1675px;top:12px" width="115" height="18" viewBox="0 0 115 18"><path d="M5 9.5 H15" stroke="#111" stroke-width="1.2"/><rect x="50.5" y="4.5" width="9.5" height="9.5" rx="1.3" fill="none" stroke="#111" stroke-width="1.1"/><path d="M96.2 4.2 L106 14 M106 4.2 L96.2 14" stroke="#111" stroke-width="1.1"/></svg>
<div class="a" style="left:1053px;top:36px;width:740px;height:425px;background:#fff"></div>
<div class="a" style="left:1045px;top:596px;width:749px;height:1px;background:#a0a0a0"></div>
<div class="a" style="left:1045px;top:597px;width:749px;height:1px;background:#fff"></div>
<svg class="a" style="left:1053px;top:36px" width="740" height="425" viewBox="1053 36 740 425"><path d="M1103.5 56 V421.5 H1783 M1103.5 415.5 H1783" stroke="#000" stroke-width="1" fill="none"/><path d="M1103.5 421.5 H1783" stroke="#000" stroke-width="1.5" fill="none"/><path d="M1119.5 421 V426M1159.5 421 V426M1199.5 421 V426M1239.5 421 V426M1279.5 421 V426M1319.5 421 V426M1359.5 421 V426M1399.5 421 V426M1439.5 421 V426M1479.5 421 V426M1519.5 421 V426M1559.5 421 V426M1599.5 421 V426M1639.5 421 V426M1679.5 421 V426M1719.5 421 V426M1759.5 421 V426" stroke="#000" stroke-width="1"/><path d="M1104 188.5 H1783 M1104 302.5 H1783" stroke="#00ffff" stroke-width="1.3"/><polyline points="1102.8,415.6 1106.8,418.0 1110.8,412.5 1114.8,416.3 1118.8,419.6 1122.8,416.6 1126.8,415.4 1130.8,418.0 1134.8,416.8 1138.8,409.8 1142.8,417.8 1146.8,409.8 1150.8,408.8 1154.8,409.8 1158.8,415.8 1162.8,409.8 1166.8,417.0 1170.8,417.0 1174.8,410.8 1178.8,417.0 1182.8,408.8 1186.8,418.0 1190.8,415.0 1194.8,413.8 1198.8,414.8 1202.8,416.8 1206.8,407.0 1210.8,408.0 1214.8,417.0 1218.8,413.0 1222.8,417.0 1226.8,417.0 1230.8,418.0 1234.8,408.0 1238.8,413.0 1242.8,414.0 1246.8,418.0 1250.8,418.0 1254.8,417.0 1258.8,416.0 1262.8,417.0 1266.8,410.0 1270.8,416.0 1274.8,409.0 1278.8,418.0 1282.8,418.0 1286.8,421.0 1290.8,410.0 1294.8,408.0 1298.8,416.0 1302.8,416.0 1306.8,412.0 1310.8,407.0 1314.8,412.0 1318.8,407.0 1322.8,416.0 1326.8,417.0 1330.8,406.3 1334.8,410.0 1338.8,412.0 1342.8,410.0 1346.8,419.0 1350.8,408.6 1354.8,416.0 1358.8,415.0 1362.8,419.0 1366.8,416.0 1370.8,408.6 1374.8,411.0 1378.8,413.0 1382.8,408.6 1386.8,416.0 1390.8,417.0 1394.8,408.0 1398.8,409.0 1402.8,419.0 1406.8,406.7 1410.8,417.0 1414.8,412.0 1418.8,410.0 1422.8,420.0 1426.8,415.0 1430.8,410.0 1434.8,418.0 1438.8,419.0 1442.8,418.0 1446.8,417.0 1450.8,418.0 1454.8,416.0 1458.8,409.0 1462.8,409.0 1466.8,416.0 1470.8,414.0 1474.8,409.0 1478.8,404.7 1482.8,415.0 1486.8,418.0 1490.8,419.0 1494.8,415.0 1498.8,420.0 1502.8,416.0 1506.8,416.0 1510.8,417.0 1514.8,409.0 1518.8,417.0 1522.8,415.0 1526.8,409.0 1530.8,413.0 1534.8,419.0 1538.8,417.0 1542.8,415.0 1546.8,406.0 1550.8,416.0 1554.8,416.0 1558.8,417.0 1562.8,413.0 1566.8,410.0 1570.8,415.0 1574.8,418.0 1578.8,411.0 1582.8,408.0 1586.8,409.0 1590.8,417.0 1594.8,408.0 1598.8,404.7 1602.8,418.0 1606.8,421.0 1610.8,411.0 1614.8,410.0 1618.8,413.0 1622.8,419.0 1626.8,410.0 1630.8,412.0 1634.8,418.0 1638.8,418.0 1642.8,409.0 1646.8,419.0 1650.8,404.7 1654.8,414.0 1658.8,416.0 1662.8,415.0 1666.8,418.0 1670.8,404.7 1674.8,415.0 1678.8,408.0 1682.8,416.0 1686.8,418.0 1690.8,417.0 1694.8,412.6 1698.8,418.0 1702.8,417.0 1706.8,416.0 1710.8,414.0 1714.8,416.0 1718.8,406.7 1722.8,417.0 1726.8,416.0 1730.8,417.0 1734.8,411.0 1738.8,406.7 1742.8,418.0 1746.8,406.7 1750.8,419.0 1754.8,417.0 1758.8,417.0 1762.8,418.0 1766.8,416.0 1770.8,416.0 1774.8,408.0 1778.8,406.7" fill="none" stroke="#ff90ff" stroke-width="1"/><polyline points="1102.8,109.1 1106.8,128.2 1110.8,124.1 1114.8,171.3 1118.8,126.9 1122.8,160.9 1126.8,137.1 1130.8,140.9 1134.8,133.8 1138.8,116.0 1142.8,130.7 1146.8,98.7 1150.8,138.1 1154.8,127.9 1158.8,67.8 1162.8,104.1 1166.8,111.7 1170.8,119.8 1174.8,55.8 1178.8,111.7 1182.8,110.9 1186.8,114.7 1190.8,105.3 1194.8,72.8 1198.8,107.1 1202.8,115.5 1206.8,118.0 1210.8,99.0 1214.8,111.7 1218.8,154.8 1222.8,151.0 1226.8,111.7 1230.8,114.0 1234.8,130.0 1238.8,145.2 1242.8,126.9 1246.8,102.0 1250.8,135.8 1254.8,81.0 1258.8,139.6 1262.8,130.7 1266.8,154.1 1270.8,134.5 1274.8,145.9 1278.8,148.5 1282.8,162.9 1286.8,156.6 1290.8,137.1 1294.8,127.9 1298.8,86.0 1302.8,152.8 1306.8,143.1 1310.8,137.6 1314.8,138.8 1318.8,161.7 1322.8,174.9 1326.8,138.1 1330.8,125.6 1334.8,118.0 1338.8,135.0 1342.8,140.6 1346.8,152.8 1350.8,162.9 1354.8,121.1 1358.8,161.7 1362.8,135.0 1366.8,178.9 1370.8,145.9 1374.8,110.9 1378.8,184.5 1382.8,156.1 1386.8,178.2 1390.8,159.1 1394.8,123.1 1398.8,149.0 1402.8,107.9 1406.8,132.5 1410.8,124.1 1414.8,152.0 1418.8,114.0 1422.8,138.8 1426.8,174.9 1430.8,138.8 1434.8,137.1 1438.8,143.9 1442.8,150.3 1446.8,117.3 1450.8,124.1 1454.8,91.9 1458.8,116.0 1462.8,102.8 1466.8,149.0 1470.8,157.9 1474.8,164.2 1478.8,66.0 1482.8,175.6 1486.8,135.0 1490.8,168.8 1494.8,129.2 1498.8,167.5 1502.8,137.1 1506.8,150.3 1510.8,118.0 1514.8,124.1 1518.8,138.8 1522.8,159.9 1526.8,104.6 1530.8,108.9 1534.8,95.2 1538.8,133.8 1542.8,80.0 1546.8,135.0 1550.8,143.9 1554.8,187.1 1558.8,135.0 1562.8,118.0 1566.8,180.0 1570.8,168.0 1574.8,152.3 1578.8,132.0 1582.8,78.7 1586.8,149.0 1590.8,164.2 1594.8,107.9 1598.8,141.9 1602.8,133.0 1606.8,127.9 1610.8,110.9 1614.8,125.6 1618.8,137.1 1622.8,123.1 1626.8,110.9 1630.8,107.9 1634.8,95.2 1638.8,119.0 1642.8,178.9 1646.8,147.7 1650.8,124.9 1654.8,107.9 1658.8,165.0 1662.8,124.9 1666.8,121.8 1670.8,138.1 1674.8,131.7 1678.8,117.3 1682.8,140.6 1686.8,116.8 1690.8,129.2 1694.8,164.2 1698.8,156.6 1702.8,157.1 1706.8,145.9 1710.8,164.2 1714.8,133.8 1718.8,149.0 1722.8,158.4 1726.8,125.6 1730.8,130.0 1734.8,147.7 1738.8,121.1 1742.8,121.8 1746.8,162.9 1750.8,149.0 1754.8,140.6 1758.8,124.9 1762.8,144.7 1766.8,119.8 1770.8,145.9 1774.8,154.8 1778.8,143.9" fill="none" stroke="#ffff00" stroke-width="1"/><polyline points="1102.8,244.9 1106.8,209.1 1110.8,199.2 1114.8,224.1 1118.8,181.2 1122.8,185.0 1126.8,164.2 1130.8,190.1 1134.8,186.3 1138.8,188.3 1142.8,189.1 1146.8,186.3 1150.8,182.0 1154.8,186.3 1158.8,176.9 1162.8,175.6 1166.8,167.3 1170.8,159.9 1174.8,173.1 1178.8,178.2 1182.8,190.9 1186.8,154.1 1190.8,181.2 1194.8,149.0 1198.8,192.1 1202.8,182.0 1206.8,215.0 1210.8,209.1 1214.8,185.0 1218.8,181.2 1222.8,176.1 1226.8,169.8 1230.8,189.1 1234.8,183.8 1238.8,231.0 1242.8,149.7 1246.8,168.0 1250.8,192.9 1254.8,183.8 1258.8,165.0 1262.8,201.0 1266.8,183.8 1270.8,149.7 1274.8,164.2 1278.8,183.8 1282.8,161.7 1286.8,228.9 1290.8,176.1 1294.8,187.1 1298.8,178.2 1302.8,177.7 1306.8,176.1 1310.8,162.9 1314.8,225.1 1318.8,199.0 1322.8,214.2 1326.8,205.6 1330.8,207.4 1334.8,212.4 1338.8,189.6 1342.8,209.1 1346.8,178.9 1350.8,204.8 1354.8,211.2 1358.8,222.1 1362.8,191.6 1366.8,202.3 1370.8,166.0 1374.8,204.8 1378.8,178.9 1382.8,273.9 1386.8,345.1 1390.8,335.9 1394.8,345.8 1398.8,324.1 1402.8,335.9 1406.8,340.0 1410.8,317.7 1414.8,330.3 1418.8,333.7 1422.8,321.8 1426.8,345.8 1430.8,346.9 1434.8,340.9 1438.8,333.7 1442.8,354.9 1446.8,334.7 1450.8,312.7 1454.8,344.0 1458.8,337.0 1462.8,344.0 1466.8,359.8 1470.8,332.1 1474.8,338.7 1478.8,325.6 1482.8,354.9 1486.8,324.1 1490.8,226.9 1494.8,183.8 1498.8,173.1 1502.8,188.8 1506.8,166.2 1510.8,166.2 1514.8,190.9 1518.8,152.8 1522.8,185.0 1526.8,189.6 1530.8,151.0 1534.8,208.1 1538.8,182.0 1542.8,192.1 1546.8,244.2 1550.8,209.1 1554.8,192.9 1558.8,176.9 1562.8,216.2 1566.8,156.6 1570.8,236.0 1574.8,213.7 1578.8,210.7 1582.8,222.1 1586.8,240.9 1590.8,198.0 1594.8,195.9 1598.8,182.7 1602.8,175.6 1606.8,176.9 1610.8,222.1 1614.8,176.9 1618.8,193.9 1622.8,178.9 1626.8,211.7 1630.8,149.7 1634.8,168.8 1638.8,164.2 1642.8,166.8 1646.8,209.1 1650.8,171.1 1654.8,203.6 1658.8,187.8 1662.8,211.7 1666.8,195.9 1670.8,174.9 1674.8,169.8 1678.8,212.9 1682.8,180.7 1686.8,205.6 1690.8,199.7 1694.8,173.9 1698.8,223.9 1702.8,219.5 1706.8,196.7 1710.8,199.0 1714.8,188.8 1718.8,173.9 1722.8,185.3 1726.8,225.9 1730.8,212.9 1734.8,194.7 1738.8,198.0 1742.8,222.1 1746.8,215.0 1750.8,223.1 1754.8,203.6 1758.8,215.0 1762.8,169.8 1766.8,196.7 1770.8,214.2 1774.8,219.5 1778.8,223.1" fill="none" stroke="#8888ff" stroke-width="1"/><path d="M1102.8 412.1l3.5 3.5l-3.5 3.5l-3.5 -3.5zM1106.8 414.5l3.5 3.5l-3.5 3.5l-3.5 -3.5zM1110.8 409.0l3.5 3.5l-3.5 3.5l-3.5 -3.5zM1114.8 412.8l3.5 3.5l-3.5 3.5l-3.5 -3.5zM1118.8 416.1l3.5 3.5l-3.5 3.5l-3.5 -3.5zM1122.8 413.1l3.5 3.5l-3.5 3.5l-3.5 -3.5zM1126.8 411.9l3.5 3.5l-3.5 3.5l-3.5 -3.5zM1130.8 414.5l3.5 3.5l-3.5 3.5l-3.5 -3.5zM1134.8 413.3l3.5 3.5l-3.5 3.5l-3.5 -3.5zM1138.8 406.3l3.5 3.5l-3.5 3.5l-3.5 -3.5zM1142.8 414.3l3.5 3.5l-3.5 3.5l-3.5 -3.5zM1146.8 406.3l3.5 3.5l-3.5 3.5l-3.5 -3.5zM1150.8 405.3l3.5 3.5l-3.5 3.5l-3.5 -3.5zM1154.8 406.3l3.5 3.5l-3.5 3.5l-3.5 -3.5zM1158.8 412.3l3.5 3.5l-3.5 3.5l-3.5 -3.5zM1162.8 406.3l3.5 3.5l-3.5 3.5l-3.5 -3.5zM1166.8 413.5l3.5 3.5l-3.5 3.5l-3.5 -3.5zM1170.8 413.5l3.5 3.5l-3.5 3.5l-3.5 -3.5zM1174.8 407.3l3.5 3.5l-3.5 3.5l-3.5 -3.5zM1178.8 413.5l3.5 3.5l-3.5 3.5l-3.5 -3.5zM1182.8 405.3l3.5 3.5l-3.5 3.5l-3.5 -3.5zM1186.8 414.5l3.5 3.5l-3.5 3.5l-3.5 -3.5zM1190.8 411.5l3.5 3.5l-3.5 3.5l-3.5 -3.5zM1194.8 410.3l3.5 3.5l-3.5 3.5l-3.5 -3.5zM1198.8 411.3l3.5 3.5l-3.5 3.5l-3.5 -3.5zM1202.8 413.3l3.5 3.5l-3.5 3.5l-3.5 -3.5zM1206.8 403.5l3.5 3.5l-3.5 3.5l-3.5 -3.5zM1210.8 404.5l3.5 3.5l-3.5 3.5l-3.5 -3.5zM1214.8 413.5l3.5 3.5l-3.5 3.5l-3.5 -3.5zM1218.8 409.5l3.5 3.5l-3.5 3.5l-3.5 -3.5zM1222.8 413.5l3.5 3.5l-3.5 3.5l-3.5 -3.5zM1226.8 413.5l3.5 3.5l-3.5 3.5l-3.5 -3.5zM1230.8 414.5l3.5 3.5l-3.5 3.5l-3.5 -3.5zM1234.8 404.5l3.5 3.5l-3.5 3.5l-3.5 -3.5zM1238.8 409.5l3.5 3.5l-3.5 3.5l-3.5 -3.5zM1242.8 410.5l3.5 3.5l-3.5 3.5l-3.5 -3.5zM1246.8 414.5l3.5 3.5l-3.5 3.5l-3.5 -3.5zM1250.8 414.5l3.5 3.5l-3.5 3.5l-3.5 -3.5zM1254.8 413.5l3.5 3.5l-3.5 3.5l-3.5 -3.5zM1258.8 412.5l3.5 3.5l-3.5 3.5l-3.5 -3.5zM1262.8 413.5l3.5 3.5l-3.5 3.5l-3.5 -3.5zM1266.8 406.5l3.5 3.5l-3.5 3.5l-3.5 -3.5zM1270.8 412.5l3.5 3.5l-3.5 3.5l-3.5 -3.5zM1274.8 405.5l3.5 3.5l-3.5 3.5l-3.5 -3.5zM1278.8 414.5l3.5 3.5l-3.5 3.5l-3.5 -3.5zM1282.8 414.5l3.5 3.5l-3.5 3.5l-3.5 -3.5zM1286.8 417.5l3.5 3.5l-3.5 3.5l-3.5 -3.5zM1290.8 406.5l3.5 3.5l-3.5 3.5l-3.5 -3.5zM1294.8 404.5l3.5 3.5l-3.5 3.5l-3.5 -3.5zM1298.8 412.5l3.5 3.5l-3.5 3.5l-3.5 -3.5zM1302.8 412.5l3.5 3.5l-3.5 3.5l-3.5 -3.5zM1306.8 408.5l3.5 3.5l-3.5 3.5l-3.5 -3.5zM1310.8 403.5l3.5 3.5l-3.5 3.5l-3.5 -3.5zM1314.8 408.5l3.5 3.5l-3.5 3.5l-3.5 -3.5zM1318.8 403.5l3.5 3.5l-3.5 3.5l-3.5 -3.5zM1322.8 412.5l3.5 3.5l-3.5 3.5l-3.5 -3.5zM1326.8 413.5l3.5 3.5l-3.5 3.5l-3.5 -3.5zM1330.8 402.8l3.5 3.5l-3.5 3.5l-3.5 -3.5zM1334.8 406.5l3.5 3.5l-3.5 3.5l-3.5 -3.5zM1338.8 408.5l3.5 3.5l-3.5 3.5l-3.5 -3.5zM1342.8 406.5l3.5 3.5l-3.5 3.5l-3.5 -3.5zM1346.8 415.5l3.5 3.5l-3.5 3.5l-3.5 -3.5zM1350.8 405.1l3.5 3.5l-3.5 3.5l-3.5 -3.5zM1354.8 412.5l3.5 3.5l-3.5 3.5l-3.5 -3.5zM1358.8 411.5l3.5 3.5l-3.5 3.5l-3.5 -3.5zM1362.8 415.5l3.5 3.5l-3.5 3.5l-3.5 -3.5zM1366.8 412.5l3.5 3.5l-3.5 3.5l-3.5 -3.5zM1370.8 405.1l3.5 3.5l-3.5 3.5l-3.5 -3.5zM1374.8 407.5l3.5 3.5l-3.5 3.5l-3.5 -3.5zM1378.8 409.5l3.5 3.5l-3.5 3.5l-3.5 -3.5zM1382.8 405.1l3.5 3.5l-3.5 3.5l-3.5 -3.5zM1386.8 412.5l3.5 3.5l-3.5 3.5l-3.5 -3.5zM1390.8 413.5l3.5 3.5l-3.5 3.5l-3.5 -3.5zM1394.8 404.5l3.5 3.5l-3.5 3.5l-3.5 -3.5zM1398.8 405.5l3.5 3.5l-3.5 3.5l-3.5 -3.5zM1402.8 415.5l3.5 3.5l-3.5 3.5l-3.5 -3.5zM1406.8 403.2l3.5 3.5l-3.5 3.5l-3.5 -3.5zM1410.8 413.5l3.5 3.5l-3.5 3.5l-3.5 -3.5zM1414.8 408.5l3.5 3.5l-3.5 3.5l-3.5 -3.5zM1418.8 406.5l3.5 3.5l-3.5 3.5l-3.5 -3.5zM1422.8 416.5l3.5 3.5l-3.5 3.5l-3.5 -3.5zM1426.8 411.5l3.5 3.5l-3.5 3.5l-3.5 -3.5zM1430.8 406.5l3.5 3.5l-3.5 3.5l-3.5 -3.5zM1434.8 414.5l3.5 3.5l-3.5 3.5l-3.5 -3.5zM1438.8 415.5l3.5 3.5l-3.5 3.5l-3.5 -3.5zM1442.8 414.5l3.5 3.5l-3.5 3.5l-3.5 -3.5zM1446.8 413.5l3.5 3.5l-3.5 3.5l-3.5 -3.5zM1450.8 414.5l3.5 3.5l-3.5 3.5l-3.5 -3.5zM1454.8 412.5l3.5 3.5l-3.5 3.5l-3.5 -3.5zM1458.8 405.5l3.5 3.5l-3.5 3.5l-3.5 -3.5zM1462.8 405.5l3.5 3.5l-3.5 3.5l-3.5 -3.5zM1466.8 412.5l3.5 3.5l-3.5 3.5l-3.5 -3.5zM1470.8 410.5l3.5 3.5l-3.5 3.5l-3.5 -3.5zM1474.8 405.5l3.5 3.5l-3.5 3.5l-3.5 -3.5zM1478.8 401.2l3.5 3.5l-3.5 3.5l-3.5 -3.5zM1482.8 411.5l3.5 3.5l-3.5 3.5l-3.5 -3.5zM1486.8 414.5l3.5 3.5l-3.5 3.5l-3.5 -3.5zM1490.8 415.5l3.5 3.5l-3.5 3.5l-3.5 -3.5zM1494.8 411.5l3.5 3.5l-3.5 3.5l-3.5 -3.5zM1498.8 416.5l3.5 3.5l-3.5 3.5l-3.5 -3.5zM1502.8 412.5l3.5 3.5l-3.5 3.5l-3.5 -3.5zM1506.8 412.5l3.5 3.5l-3.5 3.5l-3.5 -3.5zM1510.8 413.5l3.5 3.5l-3.5 3.5l-3.5 -3.5zM1514.8 405.5l3.5 3.5l-3.5 3.5l-3.5 -3.5zM1518.8 413.5l3.5 3.5l-3.5 3.5l-3.5 -3.5zM1522.8 411.5l3.5 3.5l-3.5 3.5l-3.5 -3.5zM1526.8 405.5l3.5 3.5l-3.5 3.5l-3.5 -3.5zM1530.8 409.5l3.5 3.5l-3.5 3.5l-3.5 -3.5zM1534.8 415.5l3.5 3.5l-3.5 3.5l-3.5 -3.5zM1538.8 413.5l3.5 3.5l-3.5 3.5l-3.5 -3.5zM1542.8 411.5l3.5 3.5l-3.5 3.5l-3.5 -3.5zM1546.8 402.5l3.5 3.5l-3.5 3.5l-3.5 -3.5zM1550.8 412.5l3.5 3.5l-3.5 3.5l-3.5 -3.5zM1554.8 412.5l3.5 3.5l-3.5 3.5l-3.5 -3.5zM1558.8 413.5l3.5 3.5l-3.5 3.5l-3.5 -3.5zM1562.8 409.5l3.5 3.5l-3.5 3.5l-3.5 -3.5zM1566.8 406.5l3.5 3.5l-3.5 3.5l-3.5 -3.5zM1570.8 411.5l3.5 3.5l-3.5 3.5l-3.5 -3.5zM1574.8 414.5l3.5 3.5l-3.5 3.5l-3.5 -3.5zM1578.8 407.5l3.5 3.5l-3.5 3.5l-3.5 -3.5zM1582.8 404.5l3.5 3.5l-3.5 3.5l-3.5 -3.5zM1586.8 405.5l3.5 3.5l-3.5 3.5l-3.5 -3.5zM1590.8 413.5l3.5 3.5l-3.5 3.5l-3.5 -3.5zM1594.8 404.5l3.5 3.5l-3.5 3.5l-3.5 -3.5zM1598.8 401.2l3.5 3.5l-3.5 3.5l-3.5 -3.5zM1602.8 414.5l3.5 3.5l-3.5 3.5l-3.5 -3.5zM1606.8 417.5l3.5 3.5l-3.5 3.5l-3.5 -3.5zM1610.8 407.5l3.5 3.5l-3.5 3.5l-3.5 -3.5zM1614.8 406.5l3.5 3.5l-3.5 3.5l-3.5 -3.5zM1618.8 409.5l3.5 3.5l-3.5 3.5l-3.5 -3.5zM1622.8 415.5l3.5 3.5l-3.5 3.5l-3.5 -3.5zM1626.8 406.5l3.5 3.5l-3.5 3.5l-3.5 -3.5zM1630.8 408.5l3.5 3.5l-3.5 3.5l-3.5 -3.5zM1634.8 414.5l3.5 3.5l-3.5 3.5l-3.5 -3.5zM1638.8 414.5l3.5 3.5l-3.5 3.5l-3.5 -3.5zM1642.8 405.5l3.5 3.5l-3.5 3.5l-3.5 -3.5zM1646.8 415.5l3.5 3.5l-3.5 3.5l-3.5 -3.5zM1650.8 401.2l3.5 3.5l-3.5 3.5l-3.5 -3.5zM1654.8 410.5l3.5 3.5l-3.5 3.5l-3.5 -3.5zM1658.8 412.5l3.5 3.5l-3.5 3.5l-3.5 -3.5zM1662.8 411.5l3.5 3.5l-3.5 3.5l-3.5 -3.5zM1666.8 414.5l3.5 3.5l-3.5 3.5l-3.5 -3.5zM1670.8 401.2l3.5 3.5l-3.5 3.5l-3.5 -3.5zM1674.8 411.5l3.5 3.5l-3.5 3.5l-3.5 -3.5zM1678.8 404.5l3.5 3.5l-3.5 3.5l-3.5 -3.5zM1682.8 412.5l3.5 3.5l-3.5 3.5l-3.5 -3.5zM1686.8 414.5l3.5 3.5l-3.5 3.5l-3.5 -3.5zM1690.8 413.5l3.5 3.5l-3.5 3.5l-3.5 -3.5zM1694.8 409.1l3.5 3.5l-3.5 3.5l-3.5 -3.5zM1698.8 414.5l3.5 3.5l-3.5 3.5l-3.5 -3.5zM1702.8 413.5l3.5 3.5l-3.5 3.5l-3.5 -3.5zM1706.8 412.5l3.5 3.5l-3.5 3.5l-3.5 -3.5zM1710.8 410.5l3.5 3.5l-3.5 3.5l-3.5 -3.5zM1714.8 412.5l3.5 3.5l-3.5 3.5l-3.5 -3.5zM1718.8 403.2l3.5 3.5l-3.5 3.5l-3.5 -3.5zM1722.8 413.5l3.5 3.5l-3.5 3.5l-3.5 -3.5zM1726.8 412.5l3.5 3.5l-3.5 3.5l-3.5 -3.5zM1730.8 413.5l3.5 3.5l-3.5 3.5l-3.5 -3.5zM1734.8 407.5l3.5 3.5l-3.5 3.5l-3.5 -3.5zM1738.8 403.2l3.5 3.5l-3.5 3.5l-3.5 -3.5zM1742.8 414.5l3.5 3.5l-3.5 3.5l-3.5 -3.5zM1746.8 403.2l3.5 3.5l-3.5 3.5l-3.5 -3.5zM1750.8 415.5l3.5 3.5l-3.5 3.5l-3.5 -3.5zM1754.8 413.5l3.5 3.5l-3.5 3.5l-3.5 -3.5zM1758.8 413.5l3.5 3.5l-3.5 3.5l-3.5 -3.5zM1762.8 414.5l3.5 3.5l-3.5 3.5l-3.5 -3.5zM1766.8 412.5l3.5 3.5l-3.5 3.5l-3.5 -3.5zM1770.8 412.5l3.5 3.5l-3.5 3.5l-3.5 -3.5zM1774.8 404.5l3.5 3.5l-3.5 3.5l-3.5 -3.5zM1778.8 403.2l3.5 3.5l-3.5 3.5l-3.5 -3.5z" fill="#ff00ff"/><path d="M1102.8 105.6l3.5 3.5l-3.5 3.5l-3.5 -3.5zM1106.8 124.7l3.5 3.5l-3.5 3.5l-3.5 -3.5zM1110.8 120.6l3.5 3.5l-3.5 3.5l-3.5 -3.5zM1114.8 167.8l3.5 3.5l-3.5 3.5l-3.5 -3.5zM1118.8 123.4l3.5 3.5l-3.5 3.5l-3.5 -3.5zM1122.8 157.4l3.5 3.5l-3.5 3.5l-3.5 -3.5zM1126.8 133.6l3.5 3.5l-3.5 3.5l-3.5 -3.5zM1130.8 137.4l3.5 3.5l-3.5 3.5l-3.5 -3.5zM1134.8 130.3l3.5 3.5l-3.5 3.5l-3.5 -3.5zM1138.8 112.5l3.5 3.5l-3.5 3.5l-3.5 -3.5zM1142.8 127.2l3.5 3.5l-3.5 3.5l-3.5 -3.5zM1146.8 95.2l3.5 3.5l-3.5 3.5l-3.5 -3.5zM1150.8 134.6l3.5 3.5l-3.5 3.5l-3.5 -3.5zM1154.8 124.4l3.5 3.5l-3.5 3.5l-3.5 -3.5zM1158.8 64.3l3.5 3.5l-3.5 3.5l-3.5 -3.5zM1162.8 100.6l3.5 3.5l-3.5 3.5l-3.5 -3.5zM1166.8 108.2l3.5 3.5l-3.5 3.5l-3.5 -3.5zM1170.8 116.3l3.5 3.5l-3.5 3.5l-3.5 -3.5zM1174.8 52.3l3.5 3.5l-3.5 3.5l-3.5 -3.5zM1178.8 108.2l3.5 3.5l-3.5 3.5l-3.5 -3.5zM1182.8 107.4l3.5 3.5l-3.5 3.5l-3.5 -3.5zM1186.8 111.2l3.5 3.5l-3.5 3.5l-3.5 -3.5zM1190.8 101.8l3.5 3.5l-3.5 3.5l-3.5 -3.5zM1194.8 69.3l3.5 3.5l-3.5 3.5l-3.5 -3.5zM1198.8 103.6l3.5 3.5l-3.5 3.5l-3.5 -3.5zM1202.8 112.0l3.5 3.5l-3.5 3.5l-3.5 -3.5zM1206.8 114.5l3.5 3.5l-3.5 3.5l-3.5 -3.5zM1210.8 95.5l3.5 3.5l-3.5 3.5l-3.5 -3.5zM1214.8 108.2l3.5 3.5l-3.5 3.5l-3.5 -3.5zM1218.8 151.3l3.5 3.5l-3.5 3.5l-3.5 -3.5zM1222.8 147.5l3.5 3.5l-3.5 3.5l-3.5 -3.5zM1226.8 108.2l3.5 3.5l-3.5 3.5l-3.5 -3.5zM1230.8 110.5l3.5 3.5l-3.5 3.5l-3.5 -3.5zM1234.8 126.5l3.5 3.5l-3.5 3.5l-3.5 -3.5zM1238.8 141.7l3.5 3.5l-3.5 3.5l-3.5 -3.5zM1242.8 123.4l3.5 3.5l-3.5 3.5l-3.5 -3.5zM1246.8 98.5l3.5 3.5l-3.5 3.5l-3.5 -3.5zM1250.8 132.3l3.5 3.5l-3.5 3.5l-3.5 -3.5zM1254.8 77.5l3.5 3.5l-3.5 3.5l-3.5 -3.5zM1258.8 136.1l3.5 3.5l-3.5 3.5l-3.5 -3.5zM1262.8 127.2l3.5 3.5l-3.5 3.5l-3.5 -3.5zM1266.8 150.6l3.5 3.5l-3.5 3.5l-3.5 -3.5zM1270.8 131.0l3.5 3.5l-3.5 3.5l-3.5 -3.5zM1274.8 142.4l3.5 3.5l-3.5 3.5l-3.5 -3.5zM1278.8 145.0l3.5 3.5l-3.5 3.5l-3.5 -3.5zM1282.8 159.4l3.5 3.5l-3.5 3.5l-3.5 -3.5zM1286.8 153.1l3.5 3.5l-3.5 3.5l-3.5 -3.5zM1290.8 133.6l3.5 3.5l-3.5 3.5l-3.5 -3.5zM1294.8 124.4l3.5 3.5l-3.5 3.5l-3.5 -3.5zM1298.8 82.5l3.5 3.5l-3.5 3.5l-3.5 -3.5zM1302.8 149.3l3.5 3.5l-3.5 3.5l-3.5 -3.5zM1306.8 139.6l3.5 3.5l-3.5 3.5l-3.5 -3.5zM1310.8 134.1l3.5 3.5l-3.5 3.5l-3.5 -3.5zM1314.8 135.3l3.5 3.5l-3.5 3.5l-3.5 -3.5zM1318.8 158.2l3.5 3.5l-3.5 3.5l-3.5 -3.5zM1322.8 171.4l3.5 3.5l-3.5 3.5l-3.5 -3.5zM1326.8 134.6l3.5 3.5l-3.5 3.5l-3.5 -3.5zM1330.8 122.1l3.5 3.5l-3.5 3.5l-3.5 -3.5zM1334.8 114.5l3.5 3.5l-3.5 3.5l-3.5 -3.5zM1338.8 131.5l3.5 3.5l-3.5 3.5l-3.5 -3.5zM1342.8 137.1l3.5 3.5l-3.5 3.5l-3.5 -3.5zM1346.8 149.3l3.5 3.5l-3.5 3.5l-3.5 -3.5zM1350.8 159.4l3.5 3.5l-3.5 3.5l-3.5 -3.5zM1354.8 117.6l3.5 3.5l-3.5 3.5l-3.5 -3.5zM1358.8 158.2l3.5 3.5l-3.5 3.5l-3.5 -3.5zM1362.8 131.5l3.5 3.5l-3.5 3.5l-3.5 -3.5zM1366.8 175.4l3.5 3.5l-3.5 3.5l-3.5 -3.5zM1370.8 142.4l3.5 3.5l-3.5 3.5l-3.5 -3.5zM1374.8 107.4l3.5 3.5l-3.5 3.5l-3.5 -3.5zM1378.8 181.0l3.5 3.5l-3.5 3.5l-3.5 -3.5zM1382.8 152.6l3.5 3.5l-3.5 3.5l-3.5 -3.5zM1386.8 174.7l3.5 3.5l-3.5 3.5l-3.5 -3.5zM1390.8 155.6l3.5 3.5l-3.5 3.5l-3.5 -3.5zM1394.8 119.6l3.5 3.5l-3.5 3.5l-3.5 -3.5zM1398.8 145.5l3.5 3.5l-3.5 3.5l-3.5 -3.5zM1402.8 104.4l3.5 3.5l-3.5 3.5l-3.5 -3.5zM1406.8 129.0l3.5 3.5l-3.5 3.5l-3.5 -3.5zM1410.8 120.6l3.5 3.5l-3.5 3.5l-3.5 -3.5zM1414.8 148.5l3.5 3.5l-3.5 3.5l-3.5 -3.5zM1418.8 110.5l3.5 3.5l-3.5 3.5l-3.5 -3.5zM1422.8 135.3l3.5 3.5l-3.5 3.5l-3.5 -3.5zM1426.8 171.4l3.5 3.5l-3.5 3.5l-3.5 -3.5zM1430.8 135.3l3.5 3.5l-3.5 3.5l-3.5 -3.5zM1434.8 133.6l3.5 3.5l-3.5 3.5l-3.5 -3.5zM1438.8 140.4l3.5 3.5l-3.5 3.5l-3.5 -3.5zM1442.8 146.8l3.5 3.5l-3.5 3.5l-3.5 -3.5zM1446.8 113.8l3.5 3.5l-3.5 3.5l-3.5 -3.5zM1450.8 120.6l3.5 3.5l-3.5 3.5l-3.5 -3.5zM1454.8 88.4l3.5 3.5l-3.5 3.5l-3.5 -3.5zM1458.8 112.5l3.5 3.5l-3.5 3.5l-3.5 -3.5zM1462.8 99.3l3.5 3.5l-3.5 3.5l-3.5 -3.5zM1466.8 145.5l3.5 3.5l-3.5 3.5l-3.5 -3.5zM1470.8 154.4l3.5 3.5l-3.5 3.5l-3.5 -3.5zM1474.8 160.7l3.5 3.5l-3.5 3.5l-3.5 -3.5zM1478.8 62.5l3.5 3.5l-3.5 3.5l-3.5 -3.5zM1482.8 172.1l3.5 3.5l-3.5 3.5l-3.5 -3.5zM1486.8 131.5l3.5 3.5l-3.5 3.5l-3.5 -3.5zM1490.8 165.3l3.5 3.5l-3.5 3.5l-3.5 -3.5zM1494.8 125.7l3.5 3.5l-3.5 3.5l-3.5 -3.5zM1498.8 164.0l3.5 3.5l-3.5 3.5l-3.5 -3.5zM1502.8 133.6l3.5 3.5l-3.5 3.5l-3.5 -3.5zM1506.8 146.8l3.5 3.5l-3.5 3.5l-3.5 -3.5zM1510.8 114.5l3.5 3.5l-3.5 3.5l-3.5 -3.5zM1514.8 120.6l3.5 3.5l-3.5 3.5l-3.5 -3.5zM1518.8 135.3l3.5 3.5l-3.5 3.5l-3.5 -3.5zM1522.8 156.4l3.5 3.5l-3.5 3.5l-3.5 -3.5zM1526.8 101.1l3.5 3.5l-3.5 3.5l-3.5 -3.5zM1530.8 105.4l3.5 3.5l-3.5 3.5l-3.5 -3.5zM1534.8 91.7l3.5 3.5l-3.5 3.5l-3.5 -3.5zM1538.8 130.3l3.5 3.5l-3.5 3.5l-3.5 -3.5zM1542.8 76.5l3.5 3.5l-3.5 3.5l-3.5 -3.5zM1546.8 131.5l3.5 3.5l-3.5 3.5l-3.5 -3.5zM1550.8 140.4l3.5 3.5l-3.5 3.5l-3.5 -3.5zM1554.8 183.6l3.5 3.5l-3.5 3.5l-3.5 -3.5zM1558.8 131.5l3.5 3.5l-3.5 3.5l-3.5 -3.5zM1562.8 114.5l3.5 3.5l-3.5 3.5l-3.5 -3.5zM1566.8 176.5l3.5 3.5l-3.5 3.5l-3.5 -3.5zM1570.8 164.5l3.5 3.5l-3.5 3.5l-3.5 -3.5zM1574.8 148.8l3.5 3.5l-3.5 3.5l-3.5 -3.5zM1578.8 128.5l3.5 3.5l-3.5 3.5l-3.5 -3.5zM1582.8 75.2l3.5 3.5l-3.5 3.5l-3.5 -3.5zM1586.8 145.5l3.5 3.5l-3.5 3.5l-3.5 -3.5zM1590.8 160.7l3.5 3.5l-3.5 3.5l-3.5 -3.5zM1594.8 104.4l3.5 3.5l-3.5 3.5l-3.5 -3.5zM1598.8 138.4l3.5 3.5l-3.5 3.5l-3.5 -3.5zM1602.8 129.5l3.5 3.5l-3.5 3.5l-3.5 -3.5zM1606.8 124.4l3.5 3.5l-3.5 3.5l-3.5 -3.5zM1610.8 107.4l3.5 3.5l-3.5 3.5l-3.5 -3.5zM1614.8 122.1l3.5 3.5l-3.5 3.5l-3.5 -3.5zM1618.8 133.6l3.5 3.5l-3.5 3.5l-3.5 -3.5zM1622.8 119.6l3.5 3.5l-3.5 3.5l-3.5 -3.5zM1626.8 107.4l3.5 3.5l-3.5 3.5l-3.5 -3.5zM1630.8 104.4l3.5 3.5l-3.5 3.5l-3.5 -3.5zM1634.8 91.7l3.5 3.5l-3.5 3.5l-3.5 -3.5zM1638.8 115.5l3.5 3.5l-3.5 3.5l-3.5 -3.5zM1642.8 175.4l3.5 3.5l-3.5 3.5l-3.5 -3.5zM1646.8 144.2l3.5 3.5l-3.5 3.5l-3.5 -3.5zM1650.8 121.4l3.5 3.5l-3.5 3.5l-3.5 -3.5zM1654.8 104.4l3.5 3.5l-3.5 3.5l-3.5 -3.5zM1658.8 161.5l3.5 3.5l-3.5 3.5l-3.5 -3.5zM1662.8 121.4l3.5 3.5l-3.5 3.5l-3.5 -3.5zM1666.8 118.3l3.5 3.5l-3.5 3.5l-3.5 -3.5zM1670.8 134.6l3.5 3.5l-3.5 3.5l-3.5 -3.5zM1674.8 128.2l3.5 3.5l-3.5 3.5l-3.5 -3.5zM1678.8 113.8l3.5 3.5l-3.5 3.5l-3.5 -3.5zM1682.8 137.1l3.5 3.5l-3.5 3.5l-3.5 -3.5zM1686.8 113.3l3.5 3.5l-3.5 3.5l-3.5 -3.5zM1690.8 125.7l3.5 3.5l-3.5 3.5l-3.5 -3.5zM1694.8 160.7l3.5 3.5l-3.5 3.5l-3.5 -3.5zM1698.8 153.1l3.5 3.5l-3.5 3.5l-3.5 -3.5zM1702.8 153.6l3.5 3.5l-3.5 3.5l-3.5 -3.5zM1706.8 142.4l3.5 3.5l-3.5 3.5l-3.5 -3.5zM1710.8 160.7l3.5 3.5l-3.5 3.5l-3.5 -3.5zM1714.8 130.3l3.5 3.5l-3.5 3.5l-3.5 -3.5zM1718.8 145.5l3.5 3.5l-3.5 3.5l-3.5 -3.5zM1722.8 154.9l3.5 3.5l-3.5 3.5l-3.5 -3.5zM1726.8 122.1l3.5 3.5l-3.5 3.5l-3.5 -3.5zM1730.8 126.5l3.5 3.5l-3.5 3.5l-3.5 -3.5zM1734.8 144.2l3.5 3.5l-3.5 3.5l-3.5 -3.5zM1738.8 117.6l3.5 3.5l-3.5 3.5l-3.5 -3.5zM1742.8 118.3l3.5 3.5l-3.5 3.5l-3.5 -3.5zM1746.8 159.4l3.5 3.5l-3.5 3.5l-3.5 -3.5zM1750.8 145.5l3.5 3.5l-3.5 3.5l-3.5 -3.5zM1754.8 137.1l3.5 3.5l-3.5 3.5l-3.5 -3.5zM1758.8 121.4l3.5 3.5l-3.5 3.5l-3.5 -3.5zM1762.8 141.2l3.5 3.5l-3.5 3.5l-3.5 -3.5zM1766.8 116.3l3.5 3.5l-3.5 3.5l-3.5 -3.5zM1770.8 142.4l3.5 3.5l-3.5 3.5l-3.5 -3.5zM1774.8 151.3l3.5 3.5l-3.5 3.5l-3.5 -3.5zM1778.8 140.4l3.5 3.5l-3.5 3.5l-3.5 -3.5z" fill="#ffa500"/><path d="M1102.8 241.4l3.5 3.5l-3.5 3.5l-3.5 -3.5zM1106.8 205.6l3.5 3.5l-3.5 3.5l-3.5 -3.5zM1110.8 195.7l3.5 3.5l-3.5 3.5l-3.5 -3.5zM1114.8 220.6l3.5 3.5l-3.5 3.5l-3.5 -3.5zM1118.8 177.7l3.5 3.5l-3.5 3.5l-3.5 -3.5zM1122.8 181.5l3.5 3.5l-3.5 3.5l-3.5 -3.5zM1126.8 160.7l3.5 3.5l-3.5 3.5l-3.5 -3.5zM1130.8 186.6l3.5 3.5l-3.5 3.5l-3.5 -3.5zM1134.8 182.8l3.5 3.5l-3.5 3.5l-3.5 -3.5zM1138.8 184.8l3.5 3.5l-3.5 3.5l-3.5 -3.5zM1142.8 185.6l3.5 3.5l-3.5 3.5l-3.5 -3.5zM1146.8 182.8l3.5 3.5l-3.5 3.5l-3.5 -3.5zM1150.8 178.5l3.5 3.5l-3.5 3.5l-3.5 -3.5zM1154.8 182.8l3.5 3.5l-3.5 3.5l-3.5 -3.5zM1158.8 173.4l3.5 3.5l-3.5 3.5l-3.5 -3.5zM1162.8 172.1l3.5 3.5l-3.5 3.5l-3.5 -3.5zM1166.8 163.8l3.5 3.5l-3.5 3.5l-3.5 -3.5zM1170.8 156.4l3.5 3.5l-3.5 3.5l-3.5 -3.5zM1174.8 169.6l3.5 3.5l-3.5 3.5l-3.5 -3.5zM1178.8 174.7l3.5 3.5l-3.5 3.5l-3.5 -3.5zM1182.8 187.4l3.5 3.5l-3.5 3.5l-3.5 -3.5zM1186.8 150.6l3.5 3.5l-3.5 3.5l-3.5 -3.5zM1190.8 177.7l3.5 3.5l-3.5 3.5l-3.5 -3.5zM1194.8 145.5l3.5 3.5l-3.5 3.5l-3.5 -3.5zM1198.8 188.6l3.5 3.5l-3.5 3.5l-3.5 -3.5zM1202.8 178.5l3.5 3.5l-3.5 3.5l-3.5 -3.5zM1206.8 211.5l3.5 3.5l-3.5 3.5l-3.5 -3.5zM1210.8 205.6l3.5 3.5l-3.5 3.5l-3.5 -3.5zM1214.8 181.5l3.5 3.5l-3.5 3.5l-3.5 -3.5zM1218.8 177.7l3.5 3.5l-3.5 3.5l-3.5 -3.5zM1222.8 172.6l3.5 3.5l-3.5 3.5l-3.5 -3.5zM1226.8 166.3l3.5 3.5l-3.5 3.5l-3.5 -3.5zM1230.8 185.6l3.5 3.5l-3.5 3.5l-3.5 -3.5zM1234.8 180.3l3.5 3.5l-3.5 3.5l-3.5 -3.5zM1238.8 227.5l3.5 3.5l-3.5 3.5l-3.5 -3.5zM1242.8 146.2l3.5 3.5l-3.5 3.5l-3.5 -3.5zM1246.8 164.5l3.5 3.5l-3.5 3.5l-3.5 -3.5zM1250.8 189.4l3.5 3.5l-3.5 3.5l-3.5 -3.5zM1254.8 180.3l3.5 3.5l-3.5 3.5l-3.5 -3.5zM1258.8 161.5l3.5 3.5l-3.5 3.5l-3.5 -3.5zM1262.8 197.5l3.5 3.5l-3.5 3.5l-3.5 -3.5zM1266.8 180.3l3.5 3.5l-3.5 3.5l-3.5 -3.5zM1270.8 146.2l3.5 3.5l-3.5 3.5l-3.5 -3.5zM1274.8 160.7l3.5 3.5l-3.5 3.5l-3.5 -3.5zM1278.8 180.3l3.5 3.5l-3.5 3.5l-3.5 -3.5zM1282.8 158.2l3.5 3.5l-3.5 3.5l-3.5 -3.5zM1286.8 225.4l3.5 3.5l-3.5 3.5l-3.5 -3.5zM1290.8 172.6l3.5 3.5l-3.5 3.5l-3.5 -3.5zM1294.8 183.6l3.5 3.5l-3.5 3.5l-3.5 -3.5zM1298.8 174.7l3.5 3.5l-3.5 3.5l-3.5 -3.5zM1302.8 174.2l3.5 3.5l-3.5 3.5l-3.5 -3.5zM1306.8 172.6l3.5 3.5l-3.5 3.5l-3.5 -3.5zM1310.8 159.4l3.5 3.5l-3.5 3.5l-3.5 -3.5zM1314.8 221.6l3.5 3.5l-3.5 3.5l-3.5 -3.5zM1318.8 195.5l3.5 3.5l-3.5 3.5l-3.5 -3.5zM1322.8 210.7l3.5 3.5l-3.5 3.5l-3.5 -3.5zM1326.8 202.1l3.5 3.5l-3.5 3.5l-3.5 -3.5zM1330.8 203.9l3.5 3.5l-3.5 3.5l-3.5 -3.5zM1334.8 208.9l3.5 3.5l-3.5 3.5l-3.5 -3.5zM1338.8 186.1l3.5 3.5l-3.5 3.5l-3.5 -3.5zM1342.8 205.6l3.5 3.5l-3.5 3.5l-3.5 -3.5zM1346.8 175.4l3.5 3.5l-3.5 3.5l-3.5 -3.5zM1350.8 201.3l3.5 3.5l-3.5 3.5l-3.5 -3.5zM1354.8 207.7l3.5 3.5l-3.5 3.5l-3.5 -3.5zM1358.8 218.6l3.5 3.5l-3.5 3.5l-3.5 -3.5zM1362.8 188.1l3.5 3.5l-3.5 3.5l-3.5 -3.5zM1366.8 198.8l3.5 3.5l-3.5 3.5l-3.5 -3.5zM1370.8 162.5l3.5 3.5l-3.5 3.5l-3.5 -3.5zM1374.8 201.3l3.5 3.5l-3.5 3.5l-3.5 -3.5zM1378.8 175.4l3.5 3.5l-3.5 3.5l-3.5 -3.5zM1382.8 270.4l3.5 3.5l-3.5 3.5l-3.5 -3.5zM1386.8 341.6l3.5 3.5l-3.5 3.5l-3.5 -3.5zM1390.8 332.4l3.5 3.5l-3.5 3.5l-3.5 -3.5zM1394.8 342.3l3.5 3.5l-3.5 3.5l-3.5 -3.5zM1398.8 320.6l3.5 3.5l-3.5 3.5l-3.5 -3.5zM1402.8 332.4l3.5 3.5l-3.5 3.5l-3.5 -3.5zM1406.8 336.5l3.5 3.5l-3.5 3.5l-3.5 -3.5zM1410.8 314.2l3.5 3.5l-3.5 3.5l-3.5 -3.5zM1414.8 326.8l3.5 3.5l-3.5 3.5l-3.5 -3.5zM1418.8 330.2l3.5 3.5l-3.5 3.5l-3.5 -3.5zM1422.8 318.3l3.5 3.5l-3.5 3.5l-3.5 -3.5zM1426.8 342.3l3.5 3.5l-3.5 3.5l-3.5 -3.5zM1430.8 343.4l3.5 3.5l-3.5 3.5l-3.5 -3.5zM1434.8 337.4l3.5 3.5l-3.5 3.5l-3.5 -3.5zM1438.8 330.2l3.5 3.5l-3.5 3.5l-3.5 -3.5zM1442.8 351.4l3.5 3.5l-3.5 3.5l-3.5 -3.5zM1446.8 331.2l3.5 3.5l-3.5 3.5l-3.5 -3.5zM1450.8 309.2l3.5 3.5l-3.5 3.5l-3.5 -3.5zM1454.8 340.5l3.5 3.5l-3.5 3.5l-3.5 -3.5zM1458.8 333.5l3.5 3.5l-3.5 3.5l-3.5 -3.5zM1462.8 340.5l3.5 3.5l-3.5 3.5l-3.5 -3.5zM1466.8 356.3l3.5 3.5l-3.5 3.5l-3.5 -3.5zM1470.8 328.6l3.5 3.5l-3.5 3.5l-3.5 -3.5zM1474.8 335.2l3.5 3.5l-3.5 3.5l-3.5 -3.5zM1478.8 322.1l3.5 3.5l-3.5 3.5l-3.5 -3.5zM1482.8 351.4l3.5 3.5l-3.5 3.5l-3.5 -3.5zM1486.8 320.6l3.5 3.5l-3.5 3.5l-3.5 -3.5zM1490.8 223.4l3.5 3.5l-3.5 3.5l-3.5 -3.5zM1494.8 180.3l3.5 3.5l-3.5 3.5l-3.5 -3.5zM1498.8 169.6l3.5 3.5l-3.5 3.5l-3.5 -3.5zM1502.8 185.3l3.5 3.5l-3.5 3.5l-3.5 -3.5zM1506.8 162.7l3.5 3.5l-3.5 3.5l-3.5 -3.5zM1510.8 162.7l3.5 3.5l-3.5 3.5l-3.5 -3.5zM1514.8 187.4l3.5 3.5l-3.5 3.5l-3.5 -3.5zM1518.8 149.3l3.5 3.5l-3.5 3.5l-3.5 -3.5zM1522.8 181.5l3.5 3.5l-3.5 3.5l-3.5 -3.5zM1526.8 186.1l3.5 3.5l-3.5 3.5l-3.5 -3.5zM1530.8 147.5l3.5 3.5l-3.5 3.5l-3.5 -3.5zM1534.8 204.6l3.5 3.5l-3.5 3.5l-3.5 -3.5zM1538.8 178.5l3.5 3.5l-3.5 3.5l-3.5 -3.5zM1542.8 188.6l3.5 3.5l-3.5 3.5l-3.5 -3.5zM1546.8 240.7l3.5 3.5l-3.5 3.5l-3.5 -3.5zM1550.8 205.6l3.5 3.5l-3.5 3.5l-3.5 -3.5zM1554.8 189.4l3.5 3.5l-3.5 3.5l-3.5 -3.5zM1558.8 173.4l3.5 3.5l-3.5 3.5l-3.5 -3.5zM1562.8 212.7l3.5 3.5l-3.5 3.5l-3.5 -3.5zM1566.8 153.1l3.5 3.5l-3.5 3.5l-3.5 -3.5zM1570.8 232.5l3.5 3.5l-3.5 3.5l-3.5 -3.5zM1574.8 210.2l3.5 3.5l-3.5 3.5l-3.5 -3.5zM1578.8 207.2l3.5 3.5l-3.5 3.5l-3.5 -3.5zM1582.8 218.6l3.5 3.5l-3.5 3.5l-3.5 -3.5zM1586.8 237.4l3.5 3.5l-3.5 3.5l-3.5 -3.5zM1590.8 194.5l3.5 3.5l-3.5 3.5l-3.5 -3.5zM1594.8 192.4l3.5 3.5l-3.5 3.5l-3.5 -3.5zM1598.8 179.2l3.5 3.5l-3.5 3.5l-3.5 -3.5zM1602.8 172.1l3.5 3.5l-3.5 3.5l-3.5 -3.5zM1606.8 173.4l3.5 3.5l-3.5 3.5l-3.5 -3.5zM1610.8 218.6l3.5 3.5l-3.5 3.5l-3.5 -3.5zM1614.8 173.4l3.5 3.5l-3.5 3.5l-3.5 -3.5zM1618.8 190.4l3.5 3.5l-3.5 3.5l-3.5 -3.5zM1622.8 175.4l3.5 3.5l-3.5 3.5l-3.5 -3.5zM1626.8 208.2l3.5 3.5l-3.5 3.5l-3.5 -3.5zM1630.8 146.2l3.5 3.5l-3.5 3.5l-3.5 -3.5zM1634.8 165.3l3.5 3.5l-3.5 3.5l-3.5 -3.5zM1638.8 160.7l3.5 3.5l-3.5 3.5l-3.5 -3.5zM1642.8 163.3l3.5 3.5l-3.5 3.5l-3.5 -3.5zM1646.8 205.6l3.5 3.5l-3.5 3.5l-3.5 -3.5zM1650.8 167.6l3.5 3.5l-3.5 3.5l-3.5 -3.5zM1654.8 200.1l3.5 3.5l-3.5 3.5l-3.5 -3.5zM1658.8 184.3l3.5 3.5l-3.5 3.5l-3.5 -3.5zM1662.8 208.2l3.5 3.5l-3.5 3.5l-3.5 -3.5zM1666.8 192.4l3.5 3.5l-3.5 3.5l-3.5 -3.5zM1670.8 171.4l3.5 3.5l-3.5 3.5l-3.5 -3.5zM1674.8 166.3l3.5 3.5l-3.5 3.5l-3.5 -3.5zM1678.8 209.4l3.5 3.5l-3.5 3.5l-3.5 -3.5zM1682.8 177.2l3.5 3.5l-3.5 3.5l-3.5 -3.5zM1686.8 202.1l3.5 3.5l-3.5 3.5l-3.5 -3.5zM1690.8 196.2l3.5 3.5l-3.5 3.5l-3.5 -3.5zM1694.8 170.4l3.5 3.5l-3.5 3.5l-3.5 -3.5zM1698.8 220.4l3.5 3.5l-3.5 3.5l-3.5 -3.5zM1702.8 216.0l3.5 3.5l-3.5 3.5l-3.5 -3.5zM1706.8 193.2l3.5 3.5l-3.5 3.5l-3.5 -3.5zM1710.8 195.5l3.5 3.5l-3.5 3.5l-3.5 -3.5zM1714.8 185.3l3.5 3.5l-3.5 3.5l-3.5 -3.5zM1718.8 170.4l3.5 3.5l-3.5 3.5l-3.5 -3.5zM1722.8 181.8l3.5 3.5l-3.5 3.5l-3.5 -3.5zM1726.8 222.4l3.5 3.5l-3.5 3.5l-3.5 -3.5zM1730.8 209.4l3.5 3.5l-3.5 3.5l-3.5 -3.5zM1734.8 191.2l3.5 3.5l-3.5 3.5l-3.5 -3.5zM1738.8 194.5l3.5 3.5l-3.5 3.5l-3.5 -3.5zM1742.8 218.6l3.5 3.5l-3.5 3.5l-3.5 -3.5zM1746.8 211.5l3.5 3.5l-3.5 3.5l-3.5 -3.5zM1750.8 219.6l3.5 3.5l-3.5 3.5l-3.5 -3.5zM1754.8 200.1l3.5 3.5l-3.5 3.5l-3.5 -3.5zM1758.8 211.5l3.5 3.5l-3.5 3.5l-3.5 -3.5zM1762.8 166.3l3.5 3.5l-3.5 3.5l-3.5 -3.5zM1766.8 193.2l3.5 3.5l-3.5 3.5l-3.5 -3.5zM1770.8 210.7l3.5 3.5l-3.5 3.5l-3.5 -3.5zM1774.8 216.0l3.5 3.5l-3.5 3.5l-3.5 -3.5zM1778.8 219.6l3.5 3.5l-3.5 3.5l-3.5 -3.5z" fill="#0000ff"/></svg>
<div class="a t" style="right:711px;top:178.5px;font-size:12px;line-height:14px;transform:scaleX(0.82);transform-origin:100% 50%;">2000</div>
<div class="a t" style="right:711px;top:292.5px;font-size:12px;line-height:14px;transform:scaleX(0.82);transform-origin:100% 50%;">1000</div>
<div class="a t" style="right:702.5px;top:405.5px;font-size:12px;line-height:14px;transform:scaleX(0.82);transform-origin:100% 50%;">0</div>
<div class="a t" style="left:1119.5px;top:424.6px;font-size:12px;line-height:14px;transform:translateX(-50%) scaleX(0.82);transform-origin:50% 50%;">480</div>
<div class="a t" style="left:1239.5px;top:424.6px;font-size:12px;line-height:14px;transform:translateX(-50%) scaleX(0.82);transform-origin:50% 50%;">510</div>
<div class="a t" style="left:1359.5px;top:424.6px;font-size:12px;line-height:14px;transform:translateX(-50%) scaleX(0.82);transform-origin:50% 50%;">540</div>
<div class="a t" style="left:1479.5px;top:424.6px;font-size:12px;line-height:14px;transform:translateX(-50%) scaleX(0.82);transform-origin:50% 50%;">570</div>
<div class="a t" style="left:1599.5px;top:424.6px;font-size:12px;line-height:14px;transform:translateX(-50%) scaleX(0.82);transform-origin:50% 50%;">600</div>
<div class="a t" style="left:1719.5px;top:424.6px;font-size:12px;line-height:14px;transform:translateX(-50%) scaleX(0.82);transform-origin:50% 50%;">630</div>
<div class="a t" style="left:1062px;top:38px;font-weight:bold;font-size:13px;line-height:16px;transform:scaleX(0.992);transform-origin:0 50%">2025 Jan 4: (914) Palisana occults UCAC4 501-019030 Observed by Toshihiro Horikawa</div>
<div class="a t" style="left:1598px;top:38.2px;font-size:12.5px;line-height:14.5px;transform:scaleX(0.99);transform-origin:0 50%;">/ PSF-Frame Photometry /</div>
<div class="a t" style="left:1052px;top:470.0px;font-size:12px;line-height:14px;transform:scaleX(0.95);transform-origin:0 50%;">Current-</div>
<div class="a t" style="left:1077px;top:486.0px;font-size:12px;line-height:14px;transform:translateX(-50%) scaleX(0.95);transform-origin:50% 50%;">Frame</div>
<div class="a t" style="left:1113px;top:470.0px;font-size:12px;line-height:14px;transform:scaleX(0.95);transform-origin:0 50%;">Luminous</div>
<div class="a t" style="left:1112px;top:486.0px;font-size:12px;line-height:14px;transform:scaleX(0.95);transform-origin:0 50%;">Intensity</div>
<div class="a i" style="left:1053px;top:503px;width:48px;height:19px;font-size:12px;line-height:19px;"><span style="display:inline-block;transform:scaleX(0.9);transform-origin:0 50%"></span></div>
<div class="a i" style="left:1109px;top:503px;width:56px;height:19px;font-size:12px;line-height:19px;"><span style="display:inline-block;transform:scaleX(0.9);transform-origin:0 50%"></span></div>
<div class="a" style="left:1172px;top:474px;width:160px;height:17px;background-image:repeating-conic-gradient(#f8f8f8 0 25%,#e6e6e6 0 50%);background-size:2px 2px"></div>
<div class="a b" style="left:1172px;top:474px;width:18px;height:17px;font-size:12px;"><span style="display:inline-block;transform:scaleX(0.9);"><svg width="5" height="8" viewBox="0 0 5 8"><path d="M5 0 L0 4 L5 8Z" fill="#a0a0a0"/></svg></span></div>
<div class="a" style="left:1217px;top:474px;width:17px;height:17px;background-image:repeating-conic-gradient(#505050 0 25%,#c0c0c0 0 50%);background-size:2px 2px;box-shadow:inset -1px -1px #696969"></div>
<div class="a b" style="left:1315px;top:474px;width:17px;height:17px;font-size:12px;"><span style="display:inline-block;transform:scaleX(0.9);"><svg width="5" height="8" viewBox="0 0 5 8"><path d="M0 0 L5 4 L0 8Z" fill="#a0a0a0"/></svg></span></div>
<div class="a b" style="left:1173px;top:499px;width:41px;height:24px;font-size:12px;"><span style="display:inline-block;transform:scaleX(0.85);">-10Sec</span></div>
<div class="a b" style="left:1217px;top:499px;width:33px;height:24px;font-size:12px;"><span style="display:inline-block;transform:scaleX(0.85);">-1Sec</span></div>
<div class="a b" style="left:1253px;top:499px;width:35px;height:24px;font-size:12px;"><span style="display:inline-block;transform:scaleX(0.85);">+1Sec</span></div>
<div class="a b" style="left:1291px;top:499px;width:41px;height:24px;font-size:12px;"><span style="display:inline-block;transform:scaleX(0.85);">+10Sec</span></div>
<div class="a t" style="left:1338px;top:478.0px;font-size:12px;line-height:14px;transform:scaleX(0.95);transform-origin:0 50%;">Scale</div>
<div class="a i" style="left:1377px;top:472px;width:21px;height:18px;font-size:12px;line-height:18px;"><span style="display:inline-block;transform:scaleX(0.9);transform-origin:0 50%">2</span></div>
<div class="a b" style="left:1401px;top:471px;width:16px;height:10px;font-size:12px;line-height:0"><span style="display:inline-block;transform:scaleX(0.9);"><svg width="7" height="4" viewBox="0 0 7 4"><path d="M0 4 L3.5 0 L7 4Z" fill="#000"/></svg></span></div>
<div class="a b" style="left:1401px;top:481px;width:16px;height:11px;font-size:12px;line-height:0"><span style="display:inline-block;transform:scaleX(0.9);"><svg width="7" height="4" viewBox="0 0 7 4"><path d="M0 0 L3.5 4 L7 0Z" fill="#000"/></svg></span></div>
<div class="a t" style="left:1341px;top:502.0px;font-size:12px;line-height:14px;transform:scaleX(0.9);transform-origin:0 50%;">Radius</div>
<div class="a i" style="left:1377px;top:504px;width:21px;height:18px;font-size:12px;line-height:18px;"><span style="display:inline-block;transform:scaleX(0.9);transform-origin:0 50%">3</span></div>
<div class="a b" style="left:1401px;top:502px;width:16px;height:11px;font-size:12px;line-height:0"><span style="display:inline-block;transform:scaleX(0.9);"><svg width="7" height="4" viewBox="0 0 7 4"><path d="M0 4 L3.5 0 L7 4Z" fill="#000"/></svg></span></div>
<div class="a b" style="left:1401px;top:513px;width:16px;height:11px;font-size:12px;line-height:0"><span style="display:inline-block;transform:scaleX(0.9);"><svg width="7" height="4" viewBox="0 0 7 4"><path d="M0 0 L3.5 4 L7 0Z" fill="#000"/></svg></span></div>
<div class="a ck" style="left:1053px;top:532px;width:12px;height:12px"><svg width="9" height="9" viewBox="0 0 9 9" style="position:absolute;left:1.5px;top:1.5px"><path d="M1 4.2 L3.3 6.6 L8 1.6" stroke="#000" stroke-width="1.9" fill="none"/></svg></div>
<div class="a t" style="left:1070px;top:531.0px;font-size:12px;line-height:14px;transform:scaleX(0.96);transform-origin:0 50%;">Show Image of Clicked point</div>
<div class="a ck" style="left:1053px;top:549px;width:12px;height:12px"></div>
<div class="a t" style="left:1070px;top:547.0px;font-size:12px;line-height:14px;transform:scaleX(0.96);transform-origin:0 50%;">Reproduce Aperture Position</div>
<div class="a b" style="left:1227px;top:531px;width:73px;height:24px;font-size:12px;"><span style="display:inline-block;transform:scaleX(0.96);">Save Image</span></div>
<div class="a b" style="left:1305px;top:531px;width:118px;height:24px;font-size:12px;"><span style="display:inline-block;transform:scaleX(0.96);">Copy to ClipBoard</span></div>
<div class="a g" style="left:1423px;top:472px;width:49px;height:82px;"></div>
<div class="a t" style="left:1448px;top:468.0px;font-size:12px;line-height:14px;transform:translateX(-50%) scaleX(0.92);transform-origin:50% 50%;background:#f0f0f0">Y Axis</div>
<div class="a t" style="left:1448px;top:478.0px;font-size:12px;line-height:14px;transform:translateX(-50%) scaleX(0.85);transform-origin:50% 50%;">Min Max</div>
<div class="a b" style="left:1428px;top:491px;width:17px;height:16px;font-size:12px;line-height:0"><span style="display:inline-block;transform:scaleX(0.9);"><svg width="8" height="5" viewBox="0 0 8 5"><path d="M0 5 L4 0 L8 5Z"/></svg></span></div>
<div class="a b" style="left:1428px;top:510px;width:17px;height:17px;font-size:12px;"><span style="display:inline-block;transform:scaleX(0.9);"></span></div>
<div class="a b" style="left:1428px;top:531px;width:17px;height:16px;font-size:12px;line-height:0"><span style="display:inline-block;transform:scaleX(0.9);"><svg width="8" height="5" viewBox="0 0 8 5"><path d="M0 0 L4 5 L8 0Z"/></svg></span></div>
<div class="a b" style="left:1450px;top:491px;width:17px;height:16px;font-size:12px;line-height:0"><span style="display:inline-block;transform:scaleX(0.9);"><svg width="8" height="5" viewBox="0 0 8 5"><path d="M0 5 L4 0 L8 5Z"/></svg></span></div>
<div class="a b" style="left:1450px;top:510px;width:17px;height:17px;font-size:12px;"><span style="display:inline-block;transform:scaleX(0.9);"></span></div>
<div class="a b" style="left:1450px;top:531px;width:17px;height:16px;font-size:12px;line-height:0"><span style="display:inline-block;transform:scaleX(0.9);"><svg width="8" height="5" viewBox="0 0 8 5"><path d="M0 0 L4 5 L8 0Z"/></svg></span></div>
<div class="a g" style="left:1475px;top:472px;width:60px;height:53px;"></div>
<div class="a t gl" style="left:1482px;top:466px;font-size:12px;line-height:14px;transform:scaleX(0.9);transform-origin:0 50%">Line</div>
<div class="a ck" style="left:1484px;top:481px;width:12px;height:12px"><svg width="9" height="9" viewBox="0 0 9 9" style="position:absolute;left:1.5px;top:1.5px"><path d="M1 4.2 L3.3 6.6 L8 1.6" stroke="#000" stroke-width="1.9" fill="none"/></svg></div>
<div class="a t" style="left:1502px;top:479.0px;font-size:12px;line-height:14px;transform:scaleX(0.95);transform-origin:0 50%;">Axis</div>
<div class="a ck" style="left:1484px;top:496px;width:12px;height:12px"><svg width="9" height="9" viewBox="0 0 9 9" style="position:absolute;left:1.5px;top:1.5px"><path d="M1 4.2 L3.3 6.6 L8 1.6" stroke="#000" stroke-width="1.9" fill="none"/></svg></div>
<div class="a t" style="left:1502px;top:494.0px;font-size:12px;line-height:14px;transform:scaleX(0.95);transform-origin:0 50%;">Data</div>
<div class="a b" style="left:1484px;top:507px;width:45px;height:15px;font-size:12px;"><span style="display:inline-block;transform:scaleX(0.9);">Hilight</span></div>
<div class="a b" style="left:1475px;top:530px;width:65px;height:28px;font-size:12px;"><span style="display:inline-block;transform:scaleX(0.96);">[3D] Image</span></div>
<div class="a g" style="left:1539px;top:472px;width:56px;height:53px;"></div>
<div class="a t gl" style="left:1546px;top:466px;font-size:12px;line-height:14px;transform:scaleX(0.9);transform-origin:0 50%">Width</div>
<div class="a rd" style="left:1547.5px;top:484.5px"><div style="position:absolute;left:4px;top:4px;width:4px;height:4px;border-radius:50%;background:#000"></div></div>
<div class="a t" style="left:1565px;top:483.5px;font-size:12px;line-height:14px;transform:scaleX(0.95);transform-origin:0 50%;">Part</div>
<div class="a rd" style="left:1547.5px;top:506px"></div>
<div class="a t" style="left:1565px;top:505.0px;font-size:12px;line-height:14px;transform:scaleX(0.95);transform-origin:0 50%;">Entire</div>
<div class="a b" style="left:1601px;top:470px;width:143px;height:18px;font-size:12px;"><span style="display:inline-block;transform:scaleX(0.96);">Correction for absorption</span></div>
<div class="a b" style="left:1601px;top:490px;width:103px;height:17px;font-size:12px;"><span style="display:inline-block;transform:scaleX(0.96);">Noise Reduction</span></div>
<div class="a b" style="left:1707px;top:490px;width:37px;height:17px;font-size:12px;"><span style="display:inline-block;transform:scaleX(0.96);">Reset</span></div>
<div class="a b" style="left:1757px;top:470px;width:36px;height:24px;font-size:12px;"><span style="display:inline-block;transform:scaleX(0.95);">close</span></div>
<div class="a ck" style="left:1600px;top:512px;width:12px;height:12px"><svg width="9" height="9" viewBox="0 0 9 9" style="position:absolute;left:1.5px;top:1.5px"><path d="M1 4.2 L3.3 6.6 L8 1.6" stroke="#000" stroke-width="1.9" fill="none"/></svg></div>
<div class="a t" style="left:1617px;top:510.0px;font-size:12px;line-height:14px;transform:scaleX(0.96);transform-origin:0 50%;">Information</div>
<div class="a g" style="left:1700px;top:522px;width:94px;height:34px;"></div>
<div class="a t gl" style="left:1706px;top:516px;font-size:12px;line-height:14px;transform:scaleX(0.9);transform-origin:0 50%">Object</div>
<div class="a" style="left:1752px;top:507px;width:30px;height:14px;background:#f0f0f0"></div>
<div class="a ck" style="left:1750px;top:508px;width:12px;height:12px"><svg width="9" height="9" viewBox="0 0 9 9" style="position:absolute;left:1.5px;top:1.5px"><path d="M1 4.2 L3.3 6.6 L8 1.6" stroke="#000" stroke-width="1.9" fill="none"/></svg></div>
<div class="a t" style="left:1766px;top:506.5px;font-size:12px;line-height:14px;transform:scaleX(0.95);transform-origin:0 50%;">ID</div>
<div class="a bp" style="left:1705px;top:532px;width:19px;height:17px;font-size:12px;"><span style="display:inline-block;transform:scaleX(0.9);">A</span></div>
<div class="a bp" style="left:1727px;top:532px;width:19px;height:17px;font-size:12px;"><span style="display:inline-block;transform:scaleX(0.9);">B</span></div>
<div class="a bp" style="left:1749px;top:532px;width:19px;height:17px;font-size:12px;"><span style="display:inline-block;transform:scaleX(0.9);">C</span></div>
<div class="a b" style="left:1771px;top:532px;width:18px;height:17px;font-size:12px;"><span style="display:inline-block;transform:scaleX(0.9);">L</span></div>
<div class="a b" style="left:1285px;top:563px;width:121px;height:27px;font-size:14px;font-weight:bold;color:#000030;justify-content:flex-start;padding-left:0;padding-bottom:2px"><span style="display:inline-block;transform:scaleX(1.0);margin-left:-3px;transform-origin:0 50%">Lunar Identificatior</span></div>
<div class="a b" style="left:1415px;top:563px;width:169px;height:27px;font-size:14px;font-weight:bold;"><span style="display:inline-block;transform:scaleX(1.0);">Diffraction Analysis</span></div>
<div class="a b" style="left:1589px;top:563px;width:105px;height:27px;font-size:14px;font-weight:bold;color:#000030;"><span style="display:inline-block;transform:scaleX(0.95);">Make Report</span></div>
<div class="a g" style="left:1054px;top:624px;width:735px;height:90px;"></div>
<div class="a t gl" style="left:1061px;top:618px;font-size:12px;line-height:14px;transform:scaleX(0.95);transform-origin:0 50%">S/N vs Error</div>
<div class="a t" style="left:1062px;top:634.5px;font-size:13px;line-height:15px;font-weight:bold;transform:scaleX(1.0);transform-origin:0 50%;">S/N (Full drop)</div>
<div class="a i" style="left:1165px;top:633px;width:56px;height:24px;font-size:14.5px;line-height:24px;font-weight:bold;color:#0000ff;padding-left:7px;line-height:26px"><span style="display:inline-block;transform:scaleX(0.92);transform-origin:0 50%">3.6</span></div>
<div class="a t" style="left:1246px;top:634.5px;font-size:13px;line-height:15px;font-weight:bold;transform:scaleX(1.0);transform-origin:0 50%;">S/N</div>
<div class="a i" style="left:1277px;top:632px;width:48px;height:24px;font-size:14.5px;line-height:24px;font-weight:bold;color:#ff0000;padding-left:3px"><span style="display:inline-block;transform:scaleX(0.92);transform-origin:0 50%">2.3</span></div>
<div class="a t" style="left:1333px;top:634.5px;font-size:13px;line-height:15px;font-weight:bold;transform:scaleX(1.0);transform-origin:0 50%;">expected on</div>
<div class="a i" style="left:1421px;top:632px;width:48px;height:24px;font-size:14.5px;line-height:24px;font-weight:bold;padding-left:3px"><span style="display:inline-block;transform:scaleX(0.92);transform-origin:0 50%">1.1</span></div>
<div class="a t" style="left:1477px;top:634.5px;font-size:13px;line-height:15px;font-weight:bold;transform:scaleX(1.0);transform-origin:0 50%;">Mag drop</div>
<div class="a t" style="left:1573px;top:634.5px;font-size:13px;line-height:15px;font-weight:bold;transform:scaleX(1.0);transform-origin:0 50%;">Frame exposure</div>
<div class="a i" style="left:1693px;top:632px;width:48px;height:24px;font-size:14px;line-height:24px;font-weight:bold;padding-left:3px"><span style="display:inline-block;transform:scaleX(0.98);transform-origin:0 50%">144</span></div>
<div class="a t" style="left:1750px;top:634.5px;font-size:13px;line-height:15px;font-weight:bold;transform:scaleX(1.0);transform-origin:0 50%;">msec</div>
<div class="a t" style="left:1061px;top:666.5px;font-size:13px;line-height:15px;font-weight:bold;transform:scaleX(1.0);transform-origin:0 50%;">Fresnel</div>
<div class="a t" style="left:1061px;top:682.5px;font-size:13px;line-height:15px;font-weight:bold;transform:scaleX(1.0);transform-origin:0 50%;">Number</div>
<div class="a i" style="left:1118px;top:672px;width:47px;height:24px;font-size:14px;line-height:24px;font-weight:bold;padding-left:3px"><span style="display:inline-block;transform:scaleX(0.98);transform-origin:0 50%">9626</span></div>
<div class="a t" style="left:1219px;top:666.5px;font-size:13px;line-height:15px;font-weight:bold;transform:translateX(-50%) scaleX(0.95);transform-origin:50% 50%;">Lower Limit</div>
<div class="a t" style="left:1219px;top:682.5px;font-size:13px;line-height:15px;font-weight:bold;transform:translateX(-50%) scaleX(0.95);transform-origin:50% 50%;">for detect</div>
<div class="a i" style="left:1261px;top:671px;width:56px;height:25px;font-size:14px;line-height:25px;font-weight:bold;color:#0000ff;padding-left:3px"><span style="display:inline-block;transform:scaleX(0.98);transform-origin:0 50%">2605</span></div>
<div class="a t" style="left:1318px;top:674.5px;font-size:13px;line-height:15px;font-weight:bold;transform:scaleX(1.0);transform-origin:0 50%;">msec</div>
<div class="a t" style="left:1366px;top:666.5px;font-size:13px;line-height:15px;font-weight:bold;transform:scaleX(1.0);transform-origin:0 50%;">Predicted</div>
<div class="a t" style="left:1366px;top:681.5px;font-size:13px;line-height:15px;font-weight:bold;transform:scaleX(1.0);transform-origin:0 50%;">Time Error</div>
<div class="a i" style="left:1437px;top:671px;width:64px;height:25px;font-size:14px;line-height:25px;font-weight:bold;color:#ff0000;padding-left:3px"><span style="display:inline-block;transform:scaleX(0.98);transform-origin:0 50%">153</span></div>
<div class="a t" style="left:1501px;top:681.5px;font-size:13px;line-height:15px;font-weight:bold;transform:scaleX(1.0);transform-origin:0 50%;">msec</div>
<div class="a t" style="left:1549px;top:666.5px;font-size:13px;line-height:15px;font-weight:bold;transform:scaleX(1.0);transform-origin:0 50%;">Expected Error for</div>
<div class="a t" style="left:1549px;top:681.5px;font-size:13px;line-height:15px;font-weight:bold;transform:scaleX(1.0);transform-origin:0 50%;">Analyzing event time</div>
<div class="a i" style="left:1693px;top:671px;width:48px;height:25px;font-size:14px;line-height:25px;font-weight:bold;padding-left:3px"><span style="display:inline-block;transform:scaleX(0.98);transform-origin:0 50%">146</span></div>
<div class="a t" style="left:1746px;top:681.5px;font-size:13px;line-height:15px;font-weight:bold;transform:scaleX(1.0);transform-origin:0 50%;">msec</div>
<div class="a" style="left:1045px;top:466px;width:749px;height:1px;background:#a0a0a0"></div>
<div class="a" style="left:1045px;top:467px;width:749px;height:1px;background:#fff"></div></body></html>
